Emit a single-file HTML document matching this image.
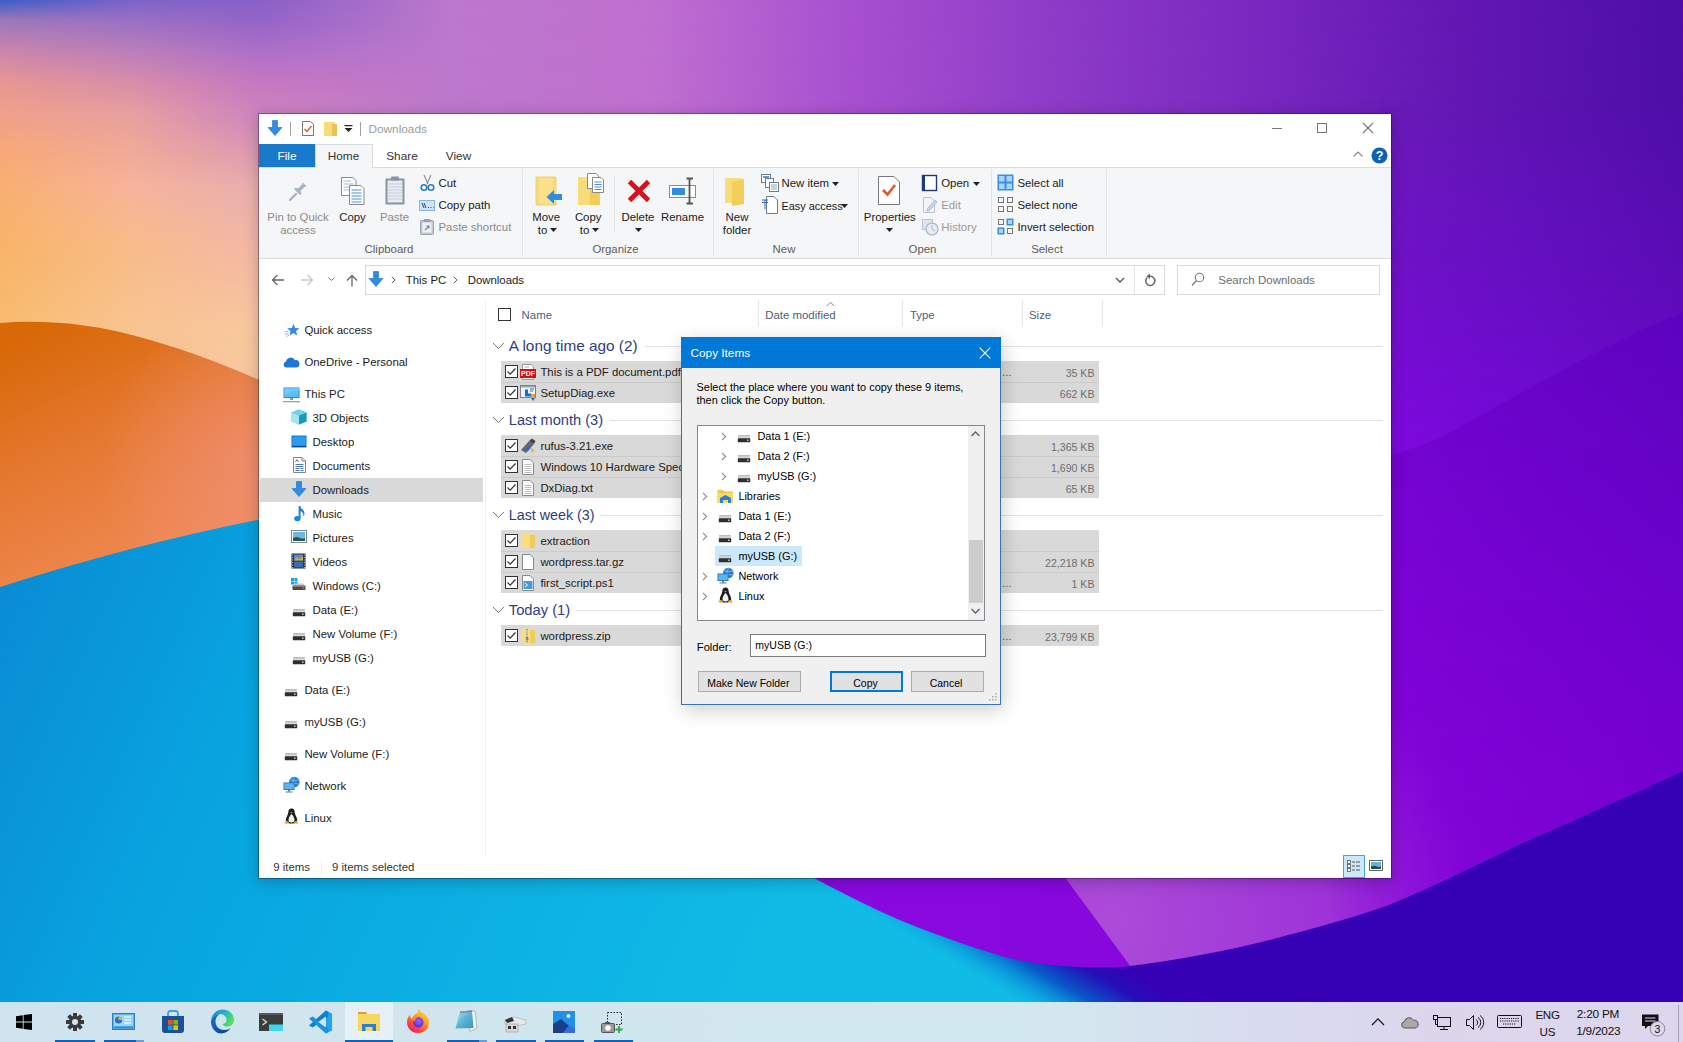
<!DOCTYPE html>
<html><head><meta charset="utf-8"><style>
html,body{margin:0;padding:0;width:1683px;height:1042px;overflow:hidden;background:#6a30c0}
body{position:relative;font-family:"Liberation Sans",sans-serif}
.a{position:absolute}
.t{position:absolute;white-space:nowrap;line-height:1;font-family:"Liberation Sans",sans-serif}
svg.a{overflow:visible}
</style></head><body>
<svg class="a" style="left:0;top:0" width="1683" height="1042" viewBox="0 0 1683 1042">
<defs>
<linearGradient id="skyr0" x1="0" y1="0" x2="1683" y2="0" gradientUnits="userSpaceOnUse"><stop offset="0.0000" stop-color="#3c5cc8"/><stop offset="0.0772" stop-color="#7c64c8"/><stop offset="0.1545" stop-color="#8a60c8"/><stop offset="0.2674" stop-color="#bc78cc"/><stop offset="0.3862" stop-color="#c070d0"/><stop offset="0.5051" stop-color="#a850d0"/><stop offset="0.6239" stop-color="#8e3cc8"/><stop offset="0.7427" stop-color="#7a28c0"/><stop offset="0.8616" stop-color="#6418b4"/><stop offset="1.0000" stop-color="#4e0ea8"/></linearGradient><linearGradient id="skyr1" x1="0" y1="0" x2="1683" y2="0" gradientUnits="userSpaceOnUse"><stop offset="0.0000" stop-color="#9a78b8"/><stop offset="0.0772" stop-color="#9a70c4"/><stop offset="0.1545" stop-color="#9464c8"/><stop offset="0.2674" stop-color="#bc78cc"/><stop offset="0.3862" stop-color="#c070d0"/><stop offset="0.5051" stop-color="#a850d0"/><stop offset="0.6239" stop-color="#8e3cc8"/><stop offset="0.7427" stop-color="#7a28c0"/><stop offset="0.8616" stop-color="#6418b4"/><stop offset="1.0000" stop-color="#4e0ea8"/></linearGradient><linearGradient id="skyr2" x1="0" y1="0" x2="1683" y2="0" gradientUnits="userSpaceOnUse"><stop offset="0.0000" stop-color="#d088a8"/><stop offset="0.0772" stop-color="#c080b8"/><stop offset="0.1545" stop-color="#b070c8"/><stop offset="0.2674" stop-color="#bc78cc"/><stop offset="0.3862" stop-color="#c070d0"/><stop offset="0.5051" stop-color="#a850d0"/><stop offset="0.6239" stop-color="#8e3cc8"/><stop offset="0.7427" stop-color="#7a28c0"/><stop offset="0.8616" stop-color="#6418b4"/><stop offset="1.0000" stop-color="#4e0ea8"/></linearGradient><linearGradient id="skyr3" x1="0" y1="0" x2="1683" y2="0" gradientUnits="userSpaceOnUse"><stop offset="0.0000" stop-color="#e89890"/><stop offset="0.0772" stop-color="#d890a8"/><stop offset="0.1545" stop-color="#c878c0"/><stop offset="0.2674" stop-color="#bc78cc"/><stop offset="0.3862" stop-color="#c070d0"/><stop offset="0.5051" stop-color="#a850d0"/><stop offset="0.6239" stop-color="#8e3cc8"/><stop offset="0.7427" stop-color="#7a28c0"/><stop offset="0.8616" stop-color="#6418b4"/><stop offset="1.0000" stop-color="#4e0ea8"/></linearGradient><linearGradient id="skyr4" x1="0" y1="0" x2="1683" y2="0" gradientUnits="userSpaceOnUse"><stop offset="0.0000" stop-color="#f0a088"/><stop offset="0.0772" stop-color="#e8a0a0"/><stop offset="0.1545" stop-color="#cc84c0"/><stop offset="0.2674" stop-color="#bc78cc"/><stop offset="0.3862" stop-color="#c070d0"/><stop offset="0.5051" stop-color="#a850d0"/><stop offset="0.6239" stop-color="#8e3cc8"/><stop offset="0.7427" stop-color="#7a28c0"/><stop offset="0.8616" stop-color="#6418b4"/><stop offset="1.0000" stop-color="#4e0ea8"/></linearGradient><linearGradient id="skyr5" x1="0" y1="0" x2="1683" y2="0" gradientUnits="userSpaceOnUse"><stop offset="0.0000" stop-color="#f8a878"/><stop offset="0.0772" stop-color="#f0aa98"/><stop offset="0.1545" stop-color="#dc98b4"/><stop offset="0.2674" stop-color="#bc78cc"/><stop offset="0.3862" stop-color="#c070d0"/><stop offset="0.5051" stop-color="#a850d0"/><stop offset="0.6239" stop-color="#8e3cc8"/><stop offset="0.7427" stop-color="#7a28c0"/><stop offset="0.8616" stop-color="#6418b4"/><stop offset="1.0000" stop-color="#4e0ea8"/></linearGradient><linearGradient id="skyr6" x1="0" y1="0" x2="1683" y2="0" gradientUnits="userSpaceOnUse"><stop offset="0.0000" stop-color="#f8b070"/><stop offset="0.0772" stop-color="#f8b49a"/><stop offset="0.1545" stop-color="#e8b0b0"/><stop offset="0.2674" stop-color="#bc78cc"/><stop offset="0.3862" stop-color="#c070d0"/><stop offset="0.5051" stop-color="#a850d0"/><stop offset="0.6239" stop-color="#8e3cc8"/><stop offset="0.7427" stop-color="#7a28c0"/><stop offset="0.8616" stop-color="#6418b4"/><stop offset="1.0000" stop-color="#4e0ea8"/></linearGradient><linearGradient id="skyr7" x1="0" y1="0" x2="1683" y2="0" gradientUnits="userSpaceOnUse"><stop offset="0.0000" stop-color="#f8b468"/><stop offset="0.0772" stop-color="#f8bc88"/><stop offset="0.1545" stop-color="#f4b8a8"/><stop offset="0.2674" stop-color="#bc78cc"/><stop offset="0.3862" stop-color="#c070d0"/><stop offset="0.5051" stop-color="#a850d0"/><stop offset="0.6239" stop-color="#8e3cc8"/><stop offset="0.7427" stop-color="#7a28c0"/><stop offset="0.8616" stop-color="#6418b4"/><stop offset="1.0000" stop-color="#4e0ea8"/></linearGradient><linearGradient id="skyr8" x1="0" y1="0" x2="1683" y2="0" gradientUnits="userSpaceOnUse"><stop offset="0.0000" stop-color="#f8bc70"/><stop offset="0.0772" stop-color="#f8c490"/><stop offset="0.1545" stop-color="#f8c8a0"/><stop offset="0.2674" stop-color="#bc78cc"/><stop offset="0.3862" stop-color="#c070d0"/><stop offset="0.5051" stop-color="#a850d0"/><stop offset="0.6239" stop-color="#8e3cc8"/><stop offset="0.7427" stop-color="#7a28c0"/><stop offset="0.8616" stop-color="#6418b4"/><stop offset="1.0000" stop-color="#4e0ea8"/></linearGradient><linearGradient id="skyr9" x1="0" y1="0" x2="1683" y2="0" gradientUnits="userSpaceOnUse"><stop offset="0.0000" stop-color="#f8bc70"/><stop offset="0.0772" stop-color="#f8c490"/><stop offset="0.1545" stop-color="#f8c8a0"/><stop offset="0.2674" stop-color="#bc78cc"/><stop offset="0.3862" stop-color="#c070d0"/><stop offset="0.5051" stop-color="#a850d0"/><stop offset="0.6239" stop-color="#8e3cc8"/><stop offset="0.7427" stop-color="#7a28c0"/><stop offset="0.8616" stop-color="#6418b4"/><stop offset="1.0000" stop-color="#4e0ea8"/></linearGradient><linearGradient id="skym0" x1="0" y1="0" x2="0" y2="20" gradientUnits="userSpaceOnUse"><stop offset="0" stop-color="#fff" stop-opacity="0"/><stop offset="1" stop-color="#fff" stop-opacity="1"/></linearGradient><mask id="skyk0" maskUnits="userSpaceOnUse" x="0" y="0" width="1683" height="20"><rect x="0" y="0" width="1683" height="20" fill="url(#skym0)"/></mask><linearGradient id="skym1" x1="0" y1="20" x2="0" y2="55" gradientUnits="userSpaceOnUse"><stop offset="0" stop-color="#fff" stop-opacity="0"/><stop offset="1" stop-color="#fff" stop-opacity="1"/></linearGradient><mask id="skyk1" maskUnits="userSpaceOnUse" x="0" y="20" width="1683" height="35"><rect x="0" y="20" width="1683" height="35" fill="url(#skym1)"/></mask><linearGradient id="skym2" x1="0" y1="55" x2="0" y2="85" gradientUnits="userSpaceOnUse"><stop offset="0" stop-color="#fff" stop-opacity="0"/><stop offset="1" stop-color="#fff" stop-opacity="1"/></linearGradient><mask id="skyk2" maskUnits="userSpaceOnUse" x="0" y="55" width="1683" height="30"><rect x="0" y="55" width="1683" height="30" fill="url(#skym2)"/></mask><linearGradient id="skym3" x1="0" y1="85" x2="0" y2="115" gradientUnits="userSpaceOnUse"><stop offset="0" stop-color="#fff" stop-opacity="0"/><stop offset="1" stop-color="#fff" stop-opacity="1"/></linearGradient><mask id="skyk3" maskUnits="userSpaceOnUse" x="0" y="85" width="1683" height="30"><rect x="0" y="85" width="1683" height="30" fill="url(#skym3)"/></mask><linearGradient id="skym4" x1="0" y1="115" x2="0" y2="150" gradientUnits="userSpaceOnUse"><stop offset="0" stop-color="#fff" stop-opacity="0"/><stop offset="1" stop-color="#fff" stop-opacity="1"/></linearGradient><mask id="skyk4" maskUnits="userSpaceOnUse" x="0" y="115" width="1683" height="35"><rect x="0" y="115" width="1683" height="35" fill="url(#skym4)"/></mask><linearGradient id="skym5" x1="0" y1="150" x2="0" y2="190" gradientUnits="userSpaceOnUse"><stop offset="0" stop-color="#fff" stop-opacity="0"/><stop offset="1" stop-color="#fff" stop-opacity="1"/></linearGradient><mask id="skyk5" maskUnits="userSpaceOnUse" x="0" y="150" width="1683" height="40"><rect x="0" y="150" width="1683" height="40" fill="url(#skym5)"/></mask><linearGradient id="skym6" x1="0" y1="190" x2="0" y2="250" gradientUnits="userSpaceOnUse"><stop offset="0" stop-color="#fff" stop-opacity="0"/><stop offset="1" stop-color="#fff" stop-opacity="1"/></linearGradient><mask id="skyk6" maskUnits="userSpaceOnUse" x="0" y="190" width="1683" height="60"><rect x="0" y="190" width="1683" height="60" fill="url(#skym6)"/></mask><linearGradient id="skym7" x1="0" y1="250" x2="0" y2="330" gradientUnits="userSpaceOnUse"><stop offset="0" stop-color="#fff" stop-opacity="0"/><stop offset="1" stop-color="#fff" stop-opacity="1"/></linearGradient><mask id="skyk7" maskUnits="userSpaceOnUse" x="0" y="250" width="1683" height="80"><rect x="0" y="250" width="1683" height="80" fill="url(#skym7)"/></mask><linearGradient id="skym8" x1="0" y1="330" x2="0" y2="440" gradientUnits="userSpaceOnUse"><stop offset="0" stop-color="#fff" stop-opacity="0"/><stop offset="1" stop-color="#fff" stop-opacity="1"/></linearGradient><mask id="skyk8" maskUnits="userSpaceOnUse" x="0" y="330" width="1683" height="110"><rect x="0" y="330" width="1683" height="110" fill="url(#skym8)"/></mask>
<linearGradient id="rsr0" x1="1380" y1="0" x2="1683" y2="0" gradientUnits="userSpaceOnUse"><stop offset="0.0000" stop-color="#6a1cb8"/><stop offset="0.4950" stop-color="#5c14b0"/><stop offset="1.0000" stop-color="#4e0ea8"/></linearGradient><linearGradient id="rsr1" x1="1380" y1="0" x2="1683" y2="0" gradientUnits="userSpaceOnUse"><stop offset="0.0000" stop-color="#7012c8"/><stop offset="0.4950" stop-color="#6410c0"/><stop offset="1.0000" stop-color="#5a0cb4"/></linearGradient><linearGradient id="rsr2" x1="1380" y1="0" x2="1683" y2="0" gradientUnits="userSpaceOnUse"><stop offset="0.0000" stop-color="#8008e0"/><stop offset="0.4950" stop-color="#7408d8"/><stop offset="1.0000" stop-color="#6a08cc"/></linearGradient><linearGradient id="rsr3" x1="1380" y1="0" x2="1683" y2="0" gradientUnits="userSpaceOnUse"><stop offset="0.0000" stop-color="#7c04d6"/><stop offset="0.4950" stop-color="#7404d0"/><stop offset="1.0000" stop-color="#6a04c8"/></linearGradient><linearGradient id="rsm0" x1="0" y1="100" x2="0" y2="250" gradientUnits="userSpaceOnUse"><stop offset="0" stop-color="#fff" stop-opacity="0"/><stop offset="1" stop-color="#fff" stop-opacity="1"/></linearGradient><mask id="rsk0" maskUnits="userSpaceOnUse" x="1380" y="100" width="303" height="150"><rect x="1380" y="100" width="303" height="150" fill="url(#rsm0)"/></mask><linearGradient id="rsm1" x1="0" y1="250" x2="0" y2="460" gradientUnits="userSpaceOnUse"><stop offset="0" stop-color="#fff" stop-opacity="0"/><stop offset="1" stop-color="#fff" stop-opacity="1"/></linearGradient><mask id="rsk1" maskUnits="userSpaceOnUse" x="1380" y="250" width="303" height="210"><rect x="1380" y="250" width="303" height="210" fill="url(#rsm1)"/></mask><linearGradient id="rsm2" x1="0" y1="460" x2="0" y2="700" gradientUnits="userSpaceOnUse"><stop offset="0" stop-color="#fff" stop-opacity="0"/><stop offset="1" stop-color="#fff" stop-opacity="1"/></linearGradient><mask id="rsk2" maskUnits="userSpaceOnUse" x="1380" y="460" width="303" height="240"><rect x="1380" y="460" width="303" height="240" fill="url(#rsm2)"/></mask>
<linearGradient id="lbr0" x1="1000" y1="0" x2="1683" y2="0" gradientUnits="userSpaceOnUse"><stop offset="0.0000" stop-color="#6c06cc"/><stop offset="0.5725" stop-color="#6c06cc"/><stop offset="0.7906" stop-color="#6404c4"/><stop offset="1.0000" stop-color="#5c04be"/></linearGradient><linearGradient id="lbr1" x1="1000" y1="0" x2="1683" y2="0" gradientUnits="userSpaceOnUse"><stop offset="0.0000" stop-color="#8404d8"/><stop offset="0.5725" stop-color="#7c04d6"/><stop offset="0.7906" stop-color="#7402d0"/><stop offset="1.0000" stop-color="#6c02cc"/></linearGradient><linearGradient id="lbr2" x1="1000" y1="0" x2="1683" y2="0" gradientUnits="userSpaceOnUse"><stop offset="0.0000" stop-color="#8808de"/><stop offset="0.5725" stop-color="#8404d8"/><stop offset="0.7906" stop-color="#7c02d4"/><stop offset="1.0000" stop-color="#7600d0"/></linearGradient><linearGradient id="lbr3" x1="1000" y1="0" x2="1683" y2="0" gradientUnits="userSpaceOnUse"><stop offset="0.0000" stop-color="#8808de"/><stop offset="0.5725" stop-color="#8a0cda"/><stop offset="0.7906" stop-color="#8002d4"/><stop offset="1.0000" stop-color="#7c00d0"/></linearGradient><linearGradient id="lbm0" x1="0" y1="300" x2="0" y2="600" gradientUnits="userSpaceOnUse"><stop offset="0" stop-color="#fff" stop-opacity="0"/><stop offset="1" stop-color="#fff" stop-opacity="1"/></linearGradient><mask id="lbk0" maskUnits="userSpaceOnUse" x="1000" y="300" width="683" height="300"><rect x="1000" y="300" width="683" height="300" fill="url(#lbm0)"/></mask><linearGradient id="lbm1" x1="0" y1="600" x2="0" y2="800" gradientUnits="userSpaceOnUse"><stop offset="0" stop-color="#fff" stop-opacity="0"/><stop offset="1" stop-color="#fff" stop-opacity="1"/></linearGradient><mask id="lbk1" maskUnits="userSpaceOnUse" x="1000" y="600" width="683" height="200"><rect x="1000" y="600" width="683" height="200" fill="url(#lbm1)"/></mask><linearGradient id="lbm2" x1="0" y1="800" x2="0" y2="1000" gradientUnits="userSpaceOnUse"><stop offset="0" stop-color="#fff" stop-opacity="0"/><stop offset="1" stop-color="#fff" stop-opacity="1"/></linearGradient><mask id="lbk2" maskUnits="userSpaceOnUse" x="1000" y="800" width="683" height="200"><rect x="1000" y="800" width="683" height="200" fill="url(#lbm2)"/></mask>
<linearGradient id="gOrange" x1="40" y1="330" x2="170" y2="600" gradientUnits="userSpaceOnUse">
<stop offset="0" stop-color="#d86808"/>
<stop offset="0.45" stop-color="#e67a34"/>
<stop offset="1" stop-color="#f28e5c"/>
</linearGradient>
<radialGradient id="gPinkTint" cx="270" cy="470" r="170" gradientUnits="userSpaceOnUse">
<stop offset="0" stop-color="#f0907c" stop-opacity="0.75"/>
<stop offset="1" stop-color="#f0907c" stop-opacity="0"/>
</radialGradient>
<clipPath id="orangeClip"><path d="M0,323 C40,320 90,322 150,340 C200,354 240,372 262,381 L900,560 L900,800 L0,800 Z"/></clipPath>
<linearGradient id="gBlue" x1="0" y1="600" x2="800" y2="960" gradientUnits="userSpaceOnUse">
<stop offset="0" stop-color="#0a8cd4"/>
<stop offset="0.3" stop-color="#08a4e0"/>
<stop offset="1" stop-color="#10bce6"/>
</linearGradient>
<linearGradient id="gUpWave" x1="1391" y1="450" x2="1683" y2="320" gradientUnits="userSpaceOnUse">
<stop offset="0" stop-color="#6e06d0" stop-opacity="0.55"/>
<stop offset="1" stop-color="#5a06c0" stop-opacity="0.55"/>
</linearGradient>
<linearGradient id="gDeep" x1="975" y1="978" x2="1018" y2="905" gradientUnits="userSpaceOnUse">
<stop offset="0" stop-color="#10b0e4" stop-opacity="0"/>
<stop offset="0.2" stop-color="#0a98dc" stop-opacity="0.7"/>
<stop offset="0.45" stop-color="#0858c8"/>
<stop offset="0.75" stop-color="#2410b8"/>
<stop offset="1" stop-color="#3600b4"/>
</linearGradient>
<radialGradient id="gLight" cx="1110" cy="920" r="360" gradientUnits="userSpaceOnUse">
<stop offset="0" stop-color="#ac4cd8"/>
<stop offset="0.6" stop-color="#a038d8" stop-opacity="0.9"/>
<stop offset="1" stop-color="#9020d8" stop-opacity="0"/>
</radialGradient>
<clipPath id="lobeClip"><path d="M700,820 C760,850 790,866 814,878 C850,897 880,912 907,923 C950,940 985,952 1014,959 C1050,966 1085,968 1121,967 C1180,960 1230,950 1273,939 C1315,928 1355,917 1391,904 C1430,888 1470,868 1516,846 C1580,818 1630,795 1683,771 L1683,312 C1600,345 1520,395 1440,438 C1420,446 1400,452 1380,460 L700,500 Z"/></clipPath>
</defs>
<rect x="0" y="0" width="1683" height="1042" fill="#7000cc"/>
<rect x="0" y="0" width="1683" height="20.5" fill="url(#skyr0)"/><rect x="0" y="0" width="1683" height="20.5" fill="url(#skyr1)" mask="url(#skyk0)"/><rect x="0" y="20" width="1683" height="35.5" fill="url(#skyr1)"/><rect x="0" y="20" width="1683" height="35.5" fill="url(#skyr2)" mask="url(#skyk1)"/><rect x="0" y="55" width="1683" height="30.5" fill="url(#skyr2)"/><rect x="0" y="55" width="1683" height="30.5" fill="url(#skyr3)" mask="url(#skyk2)"/><rect x="0" y="85" width="1683" height="30.5" fill="url(#skyr3)"/><rect x="0" y="85" width="1683" height="30.5" fill="url(#skyr4)" mask="url(#skyk3)"/><rect x="0" y="115" width="1683" height="35.5" fill="url(#skyr4)"/><rect x="0" y="115" width="1683" height="35.5" fill="url(#skyr5)" mask="url(#skyk4)"/><rect x="0" y="150" width="1683" height="40.5" fill="url(#skyr5)"/><rect x="0" y="150" width="1683" height="40.5" fill="url(#skyr6)" mask="url(#skyk5)"/><rect x="0" y="190" width="1683" height="60.5" fill="url(#skyr6)"/><rect x="0" y="190" width="1683" height="60.5" fill="url(#skyr7)" mask="url(#skyk6)"/><rect x="0" y="250" width="1683" height="80.5" fill="url(#skyr7)"/><rect x="0" y="250" width="1683" height="80.5" fill="url(#skyr8)" mask="url(#skyk7)"/><rect x="0" y="330" width="1683" height="110.5" fill="url(#skyr8)"/><rect x="0" y="330" width="1683" height="110.5" fill="url(#skyr9)" mask="url(#skyk8)"/>
<rect x="1380" y="100" width="303" height="150.5" fill="url(#rsr0)"/><rect x="1380" y="100" width="303" height="150.5" fill="url(#rsr1)" mask="url(#rsk0)"/><rect x="1380" y="250" width="303" height="210.5" fill="url(#rsr1)"/><rect x="1380" y="250" width="303" height="210.5" fill="url(#rsr2)" mask="url(#rsk1)"/><rect x="1380" y="460" width="303" height="240.5" fill="url(#rsr2)"/><rect x="1380" y="460" width="303" height="240.5" fill="url(#rsr3)" mask="url(#rsk2)"/>
<path d="M0,323 C40,320 90,322 150,340 C200,354 240,372 262,381 L900,560 L900,800 L0,800 Z" fill="url(#gOrange)"/>
<rect x="0" y="300" width="600" height="400" fill="url(#gPinkTint)" clip-path="url(#orangeClip)"/>
<path d="M0,587 C90,558 180,535 262,519 L1100,400 L1100,1042 L0,1042 Z" fill="url(#gBlue)"/>
<path d="M780,860 L1121,967 L1683,771 L1683,1042 L900,1042 Z" fill="url(#gDeep)"/>
<g clip-path="url(#lobeClip)">
<rect x="700" y="300" width="983" height="700" fill="#8808de"/>
<rect x="1000" y="300" width="683" height="300.5" fill="url(#lbr0)"/><rect x="1000" y="300" width="683" height="300.5" fill="url(#lbr1)" mask="url(#lbk0)"/><rect x="1000" y="600" width="683" height="200.5" fill="url(#lbr1)"/><rect x="1000" y="600" width="683" height="200.5" fill="url(#lbr2)" mask="url(#lbk1)"/><rect x="1000" y="800" width="683" height="200.5" fill="url(#lbr2)"/><rect x="1000" y="800" width="683" height="200.5" fill="url(#lbr3)" mask="url(#lbk2)"/>
<path d="M1030,830 L1131,967 L1683,967 L1683,500 L1400,500 Z" fill="url(#gLight)"/>
</g>
</svg>
<div class="a" style="left:258px;top:113px;width:1134px;height:766px;background:#fff;background-clip:padding-box;border:1px solid rgba(20,0,40,0.35);box-sizing:border-box;box-shadow:0 3px 14px rgba(0,0,0,0.22)"></div>
<svg class="a" style="left:267px;top:120px;" width="16" height="16" viewBox="0 0 16 16"><path d="M5.5 0.5 H10.5 V7.5 H15 L8 15.5 L1 7.5 H5.5 Z" fill="#2b8de6" stroke="#1f6fc0" stroke-width="0.6"/></svg>
<div class="a" style="left:290px;top:122px;width:1px;height:14px;background:#a0a0a0"></div>
<svg class="a" style="left:301px;top:120px;" width="14" height="17" viewBox="0 0 14 17"><path d="M1.5 1.5 H9.5 L12.5 4.5 V15.5 H1.5 Z" fill="#fff" stroke="#777" stroke-width="1"/><path d="M3.5 9 L6 11.5 L10.5 6" fill="none" stroke="#e2582c" stroke-width="1.4"/></svg>
<svg class="a" style="left:323px;top:121px;" width="15" height="16" viewBox="0 0 15 16"><path d="M1 1 H8 V15 H1 Z" fill="#f2d15e"/><path d="M1 1 H12 V15 H1 Z" fill="#f8dc78"/><path d="M9 3 H14 V15 H9 Z" fill="#e8c255"/></svg>
<svg class="a" style="left:344px;top:125px;" width="9" height="8" viewBox="0 0 9 8"><rect x="0.5" y="0" width="8" height="1.2" fill="#222"/><path d="M0.5 3 H8.5 L4.5 7 Z" fill="#222"/></svg>
<div class="a" style="left:360px;top:122px;width:1px;height:14px;background:#a0a0a0"></div>
<div class="t" style="left:368.50px;top:124.01px;font-size:11.8px;color:#9b9b9b;">Downloads</div>
<div class="a" style="left:1272px;top:128px;width:10px;height:1px;background:#777"></div>
<div class="a" style="left:1317px;top:123px;width:10px;height:10px;border:1px solid #777;box-sizing:border-box"></div>
<svg class="a" style="left:1362px;top:122px;" width="12" height="12" viewBox="0 0 12 12"><path d="M1 1 L11 11 M11 1 L1 11" stroke="#777" stroke-width="1.1"/></svg>
<div class="a" style="left:259px;top:144px;width:56px;height:23px;background:#1979ca"></div>
<div class="t" style="left:137.00px;width:300px;text-align:center;top:151.01px;font-size:11.8px;color:#fff;">File</div>
<div class="a" style="left:315px;top:144px;width:58px;height:24px;background:#f5f6f7;border:1px solid #dadbdc;border-bottom:none;box-sizing:border-box"></div>
<div class="t" style="left:193.50px;width:300px;text-align:center;top:151.01px;font-size:11.8px;color:#333;">Home</div>
<div class="t" style="left:252.00px;width:300px;text-align:center;top:151.01px;font-size:11.8px;color:#333;">Share</div>
<div class="t" style="left:308.50px;width:300px;text-align:center;top:151.01px;font-size:11.8px;color:#333;">View</div>
<svg class="a" style="left:1352px;top:150px;" width="12" height="8" viewBox="0 0 12 8"><path d="M1.5 6.5 L6 2 L10.5 6.5" fill="none" stroke="#888" stroke-width="1.1"/></svg>
<svg class="a" style="left:1371px;top:147px;" width="17" height="17" viewBox="0 0 17 17"><circle cx="8.5" cy="8.5" r="8" fill="#0b63b6"/><text x="8.5" y="13.2" font-family="Liberation Sans" font-weight="bold" font-size="12.5" fill="#fff" text-anchor="middle">?</text></svg>
<div class="a" style="left:259px;top:167px;width:1132px;height:92px;background:#f5f6f7;border-top:1px solid #dadbdc;border-bottom:1px solid #dadbdc;box-sizing:border-box"></div>
<div class="a" style="left:316px;top:167px;width:56px;height:1px;background:#f5f6f7"></div>
<div class="a" style="left:522px;top:169px;width:1px;height:87px;background:#e2e3e4"></div>
<div class="a" style="left:713px;top:169px;width:1px;height:87px;background:#e2e3e4"></div>
<div class="a" style="left:858px;top:169px;width:1px;height:87px;background:#e2e3e4"></div>
<div class="a" style="left:991px;top:169px;width:1px;height:87px;background:#e2e3e4"></div>
<div class="a" style="left:1106px;top:169px;width:1px;height:87px;background:#e2e3e4"></div>
<div class="t" style="left:239.00px;width:300px;text-align:center;top:244.35px;font-size:11.4px;color:#5c5c5c;">Clipboard</div>
<div class="t" style="left:465.50px;width:300px;text-align:center;top:244.35px;font-size:11.4px;color:#5c5c5c;">Organize</div>
<div class="t" style="left:634.00px;width:300px;text-align:center;top:244.35px;font-size:11.4px;color:#5c5c5c;">New</div>
<div class="t" style="left:772.50px;width:300px;text-align:center;top:244.35px;font-size:11.4px;color:#5c5c5c;">Open</div>
<div class="t" style="left:897.00px;width:300px;text-align:center;top:244.35px;font-size:11.4px;color:#5c5c5c;">Select</div>
<svg class="a" style="left:287px;top:180px;" width="22" height="22" viewBox="0 0 22 22"><path d="M3 20 L9 14" stroke="#aab4c6" stroke-width="2.4" stroke-linecap="round"/><path d="M7 9 L13 15 L14.5 13.5 L13.5 11 L18 6.5 L20 6.8 L15.2 2 L15.5 4 L11 8.5 L8.5 7.5 Z" fill="#aab4c6"/></svg>
<div class="t" style="left:148.00px;width:300px;text-align:center;top:211.85px;font-size:11.4px;color:#8a8a8a;">Pin to Quick</div>
<div class="t" style="left:148.00px;width:300px;text-align:center;top:224.85px;font-size:11.4px;color:#8a8a8a;">access</div>
<svg class="a" style="left:340px;top:176px;" width="26" height="30" viewBox="0 0 26 30"><path d="M1.5 1.5 H13 L16 4.5 V19.5 H1.5 Z" fill="#fff" stroke="#888" stroke-width="1"/>
<path d="M3.5 5 H11 M3.5 8 H13.5 M3.5 11 H13.5 M3.5 14 H13.5" stroke="#9fb9d8" stroke-width="1"/>
<path d="M9.5 9.5 H21 L24 12.5 V28.5 H9.5 Z" fill="#fff" stroke="#888" stroke-width="1"/>
<path d="M11.5 14 H21.5 M11.5 17 H21.5 M11.5 20 H21.5 M11.5 23 H21.5 M11.5 26 H21.5" stroke="#4a8fd8" stroke-width="1.1"/></svg>
<div class="t" style="left:202.50px;width:300px;text-align:center;top:211.85px;font-size:11.4px;color:#262626;">Copy</div>
<svg class="a" style="left:384px;top:175px;" width="22" height="31" viewBox="0 0 22 31"><rect x="1.5" y="3.5" width="19" height="26" rx="1" fill="#8a93a3"/><rect x="3.5" y="5.5" width="15" height="22" fill="#e6ebf4"/>
<path d="M4 9 H18 M4 12 H18 M4 15 H18 M4 18 H18 M4 21 H18 M4 24 H18" stroke="#c4cee0" stroke-width="1"/>
<rect x="7" y="1.5" width="8" height="4" rx="1" fill="#8a93a3"/></svg>
<div class="t" style="left:244.50px;width:300px;text-align:center;top:211.85px;font-size:11.4px;color:#8a8a8a;">Paste</div>
<svg class="a" style="left:420px;top:174px;" width="15" height="18" viewBox="0 0 15 18"><path d="M4 1 L8 10 M11 1 L7 10" stroke="#8a8a8a" stroke-width="1.1"/><circle cx="4" cy="13.5" r="2.8" fill="none" stroke="#2d7fc1" stroke-width="1.6"/><circle cx="11" cy="13.5" r="2.8" fill="none" stroke="#2d7fc1" stroke-width="1.6"/></svg>
<div class="t" style="left:438.50px;top:178.35px;font-size:11.4px;color:#1a1a1a;">Cut</div>
<svg class="a" style="left:419px;top:200px;" width="16" height="11" viewBox="0 0 16 11"><rect x="0.5" y="0.5" width="15" height="10" fill="#cfe3f5" stroke="#8bb4da" stroke-width="1"/><path d="M3 3 L5 8 M5 3 L7 8" stroke="#1f4e8a" stroke-width="1"/><path d="M9 7.5 H10 M11.5 7.5 H12.5 M14 7.5 H14.5" stroke="#1f4e8a" stroke-width="1"/></svg>
<div class="t" style="left:438.50px;top:200.35px;font-size:11.4px;color:#1a1a1a;">Copy path</div>
<svg class="a" style="left:420px;top:218px;" width="14" height="17" viewBox="0 0 14 17"><rect x="0.5" y="2.5" width="13" height="14" rx="1" fill="#c0c7d2" stroke="#9aa3b0"/><rect x="2.5" y="4.5" width="9" height="10" fill="#eef1f6"/><rect x="4" y="1" width="6" height="3" fill="#9aa3b0"/><path d="M5 12 L9 8 M6.5 8 H9 V10.5" stroke="#7a8aa0" stroke-width="1.2" fill="none"/></svg>
<div class="t" style="left:438.50px;top:222.35px;font-size:11.4px;color:#8a8a8a;">Paste shortcut</div>
<svg class="a" style="left:535px;top:175px;" width="29" height="31" viewBox="0 0 29 31"><path d="M1 2 H21 V30 H1 Z" fill="#fbe08a"/><path d="M3 2 V30 M19 2 V30" stroke="#f0cc60" stroke-width="0.8"/><path d="M1 2 H21 V30 H1 Z" fill="none" stroke="#ecc860" stroke-width="0.8"/><path d="M27 19 H19 V15 L11.5 22 L19 29 V25 H27 Z" fill="#2f8ce0"/></svg>
<div class="t" style="left:396.20px;width:300px;text-align:center;top:212.35px;font-size:11.4px;color:#1a1a1a;">Move</div>
<div class="t" style="left:392.50px;width:300px;text-align:center;top:225.35px;font-size:11.4px;color:#1a1a1a;">to</div>
<svg class="a" style="left:550px;top:228px;" width="7" height="4" viewBox="0 0 7 4"><path d="M0 0 H7 L3.5 4 Z" fill="#222"/></svg>
<svg class="a" style="left:577px;top:173px;" width="28" height="33" viewBox="0 0 28 33"><path d="M1 4 H16 V32 H1 Z" fill="#f9dc7a"/><path d="M13 7 H23 V32 H13 Z" fill="#f3cd5a"/>
<path d="M10.5 0.5 H19 L21.5 3 V15.5 H10.5 Z" fill="#fff" stroke="#888" stroke-width="1"/>
<path d="M15.5 4.5 H24 L26.5 7 V19.5 H15.5 Z" fill="#fff" stroke="#888" stroke-width="1"/>
<path d="M17.5 9 H24.5 M17.5 11.5 H24.5 M17.5 14 H24.5 M17.5 16.5 H24.5" stroke="#4a8fd8" stroke-width="1"/></svg>
<div class="t" style="left:438.20px;width:300px;text-align:center;top:212.35px;font-size:11.4px;color:#1a1a1a;">Copy</div>
<div class="t" style="left:434.50px;width:300px;text-align:center;top:225.35px;font-size:11.4px;color:#1a1a1a;">to</div>
<svg class="a" style="left:592px;top:228px;" width="7" height="4" viewBox="0 0 7 4"><path d="M0 0 H7 L3.5 4 Z" fill="#222"/></svg>
<div class="a" style="left:614px;top:176px;width:1px;height:56px;background:#e2e3e4"></div>
<svg class="a" style="left:626px;top:178px;" width="26" height="26" viewBox="0 0 26 26"><path d="M3.5 3.5 L22.5 22.5 M22.5 3.5 L3.5 22.5" stroke="#d8101c" stroke-width="4.8"/></svg>
<div class="t" style="left:488.00px;width:300px;text-align:center;top:212.35px;font-size:11.4px;color:#1a1a1a;">Delete</div>
<svg class="a" style="left:635px;top:228px;" width="7" height="4" viewBox="0 0 7 4"><path d="M0 0 H7 L3.5 4 Z" fill="#222"/></svg>
<svg class="a" style="left:668px;top:177px;" width="30" height="28" viewBox="0 0 30 28"><rect x="1.5" y="8.5" width="26" height="12" fill="#fff" stroke="#8a8a8a" stroke-width="1"/><rect x="4" y="11" width="13" height="7" fill="#2f8ce0"/>
<path d="M18.5 1.5 H25 M21.5 1.5 V26.5 M18.5 26.5 H25" stroke="#555" stroke-width="1.8"/></svg>
<div class="t" style="left:532.50px;width:300px;text-align:center;top:212.35px;font-size:11.4px;color:#1a1a1a;">Rename</div>
<svg class="a" style="left:724px;top:176px;" width="23" height="30" viewBox="0 0 23 30"><path d="M1 2 H18 V27 H1 Z" fill="#f9dc7a"/><path d="M8 6 L20 3 V28 L8 30 Z" fill="#f3cd5a"/></svg>
<div class="t" style="left:587.00px;width:300px;text-align:center;top:212.35px;font-size:11.4px;color:#1a1a1a;">New</div>
<div class="t" style="left:587.00px;width:300px;text-align:center;top:225.35px;font-size:11.4px;color:#1a1a1a;">folder</div>
<svg class="a" style="left:761px;top:174px;" width="18" height="18" viewBox="0 0 18 18"><rect x="0.5" y="0.5" width="9" height="8" fill="#fff" stroke="#6a7a90"/><rect x="2" y="2" width="6" height="2" fill="#5a9ad8"/><rect x="4.5" y="4.5" width="8" height="9" fill="#fff" stroke="#6a7a90"/><rect x="8.5" y="8.5" width="9" height="9" fill="#fff" stroke="#6a7a90"/><path d="M10 11 H16 M10 13 H16 M10 15 H16" stroke="#8aa"/></svg>
<div class="t" style="left:781.50px;top:178.35px;font-size:11.4px;color:#1a1a1a;">New item</div>
<svg class="a" style="left:832px;top:182px;" width="7" height="4" viewBox="0 0 7 4"><path d="M0 0 H7 L3.5 4 Z" fill="#222"/></svg>
<svg class="a" style="left:761px;top:196px;" width="18" height="18" viewBox="0 0 18 18"><path d="M5.5 0.5 H13 L16.5 4 V17.5 H5.5 Z" fill="#fff" stroke="#6a7a90"/><path d="M1 4 H7 M1 6.5 H7" stroke="#3a6ab0" stroke-width="1"/><path d="M4 4 V13" stroke="#3a6ab0"/></svg>
<div class="t" style="left:781.50px;top:200.77px;font-size:10.9px;color:#1a1a1a;">Easy access</div>
<svg class="a" style="left:841px;top:204px;" width="7" height="4" viewBox="0 0 7 4"><path d="M0 0 H7 L3.5 4 Z" fill="#222"/></svg>
<svg class="a" style="left:877px;top:175px;" width="24" height="31" viewBox="0 0 24 31"><path d="M1.5 1.5 H17 L22.5 7 V29.5 H1.5 Z" fill="#fff" stroke="#777" stroke-width="1"/><path d="M6 15 L10.5 19.5 L18 10" fill="none" stroke="#e2582c" stroke-width="2.6"/></svg>
<div class="t" style="left:739.80px;width:300px;text-align:center;top:212.35px;font-size:11.4px;color:#1a1a1a;">Properties</div>
<svg class="a" style="left:886px;top:228px;" width="7" height="4" viewBox="0 0 7 4"><path d="M0 0 H7 L3.5 4 Z" fill="#222"/></svg>
<svg class="a" style="left:921px;top:174px;" width="17" height="18" viewBox="0 0 17 18"><rect x="1.5" y="1.5" width="14" height="15" fill="#fff" stroke="#1e3a78" stroke-width="1.4"/><rect x="1" y="1" width="3" height="16" fill="#1e3a78"/></svg>
<div class="t" style="left:941.20px;top:178.35px;font-size:11.4px;color:#1a1a1a;">Open</div>
<svg class="a" style="left:973px;top:182px;" width="7" height="4" viewBox="0 0 7 4"><path d="M0 0 H7 L3.5 4 Z" fill="#222"/></svg>
<svg class="a" style="left:921px;top:196px;" width="17" height="18" viewBox="0 0 17 18"><path d="M2.5 1.5 H10 L13.5 5 V16.5 H2.5 Z" fill="#f2f4f8" stroke="#b8c4d6"/><path d="M6 13 L14 4 L16 6 L8 15 H6 Z" fill="#c8d4e8" stroke="#a8b8d0" stroke-width="0.8"/></svg>
<div class="t" style="left:941.20px;top:200.35px;font-size:11.4px;color:#9a9a9a;">Edit</div>
<svg class="a" style="left:921px;top:218px;" width="18" height="18" viewBox="0 0 18 18"><rect x="1.5" y="1.5" width="10" height="10" fill="#dfe5ee" stroke="#b8c4d6"/><circle cx="11" cy="11" r="6" fill="#e8edf4" stroke="#a8b4c6" stroke-width="1.2"/><path d="M11 7 V11 L14 13" stroke="#a8b4c6" fill="none"/></svg>
<div class="t" style="left:941.20px;top:222.35px;font-size:11.4px;color:#9a9a9a;">History</div>
<svg class="a" style="left:997px;top:174px;" width="17" height="17" viewBox="0 0 17 17"><rect x="0.5" y="0.5" width="16" height="16" fill="#3e8ee0"/><rect x="2" y="2" width="5.5" height="5.5" fill="#a8d4f8"/><rect x="9.5" y="2" width="5.5" height="5.5" fill="#a8d4f8"/><rect x="2" y="9.5" width="5.5" height="5.5" fill="#a8d4f8"/><rect x="9.5" y="9.5" width="5.5" height="5.5" fill="#a8d4f8"/></svg>
<div class="t" style="left:1017.40px;top:178.35px;font-size:11.4px;color:#1a1a1a;">Select all</div>
<svg class="a" style="left:997px;top:196px;" width="17" height="17" viewBox="0 0 17 17"><rect x="1.5" y="1.5" width="5" height="5" fill="none" stroke="#777"/><rect x="10.5" y="1.5" width="5" height="5" fill="none" stroke="#777"/><rect x="1.5" y="10.5" width="5" height="5" fill="none" stroke="#777"/><rect x="10.5" y="10.5" width="5" height="5" fill="none" stroke="#777"/></svg>
<div class="t" style="left:1017.40px;top:200.35px;font-size:11.4px;color:#1a1a1a;">Select none</div>
<svg class="a" style="left:997px;top:218px;" width="17" height="17" viewBox="0 0 17 17"><rect x="1.5" y="1.5" width="5" height="5" fill="none" stroke="#777"/><rect x="9.5" y="0.5" width="7" height="7" fill="#3e8ee0"/><rect x="11" y="2" width="4" height="4" fill="#a8d4f8"/><rect x="0.5" y="9.5" width="7" height="7" fill="#3e8ee0"/><rect x="2" y="11" width="4" height="4" fill="#a8d4f8"/><rect x="10.5" y="10.5" width="5" height="5" fill="none" stroke="#777"/></svg>
<div class="t" style="left:1017.40px;top:222.35px;font-size:11.4px;color:#1a1a1a;">Invert selection</div>
<svg class="a" style="left:271px;top:274px;" width="14" height="12" viewBox="0 0 14 12"><path d="M13 6 H1.5 M6.5 1 L1.5 6 L6.5 11" fill="none" stroke="#666" stroke-width="1.3"/></svg>
<svg class="a" style="left:300px;top:274px;" width="14" height="12" viewBox="0 0 14 12"><path d="M1 6 H12.5 M7.5 1 L12.5 6 L7.5 11" fill="none" stroke="#c8c8c8" stroke-width="1.3"/></svg>
<svg class="a" style="left:328px;top:277px;" width="7" height="5" viewBox="0 0 7 5"><path d="M0.5 0.5 L3.5 3.5 L6.5 0.5" fill="none" stroke="#777" stroke-width="1"/></svg>
<svg class="a" style="left:346px;top:274px;" width="12" height="13" viewBox="0 0 12 13"><path d="M6 12.5 V1.5 M1 6.5 L6 1.5 L11 6.5" fill="none" stroke="#666" stroke-width="1.3"/></svg>
<div class="a" style="left:365px;top:265px;width:800px;height:30px;border:1px solid #d9d9d9;box-sizing:border-box"></div>
<div class="a" style="left:1134px;top:266px;width:1px;height:28px;background:#e3e3e3"></div>
<svg class="a" style="left:368px;top:271px;" width="16" height="16" viewBox="0 0 16 16"><path d="M5.5 0.5 H10.5 V7.5 H15 L8 15.5 L1 7.5 H5.5 Z" fill="#2b8de6" stroke="#1f6fc0" stroke-width="0.6"/></svg>
<svg class="a" style="left:391px;top:276px;" width="5" height="8" viewBox="0 0 5 8"><path d="M0.8 0.8 L4 4 L0.8 7.2" fill="none" stroke="#666" stroke-width="1"/></svg>
<div class="t" style="left:405.80px;top:274.85px;font-size:11.4px;color:#1a1a1a;">This PC</div>
<svg class="a" style="left:453px;top:276px;" width="5" height="8" viewBox="0 0 5 8"><path d="M0.8 0.8 L4 4 L0.8 7.2" fill="none" stroke="#666" stroke-width="1"/></svg>
<div class="t" style="left:467.70px;top:274.85px;font-size:11.4px;color:#1a1a1a;">Downloads</div>
<svg class="a" style="left:1115px;top:277px;" width="10" height="6" viewBox="0 0 10 6"><path d="M1 1 L5 5 L9 1" fill="none" stroke="#555" stroke-width="1.3"/></svg>
<svg class="a" style="left:1144px;top:273px;" width="12" height="14" viewBox="0 0 12 14"><path d="M3.2 4.5 A4.6 4.6 0 1 0 6 3.3" fill="none" stroke="#666" stroke-width="1.5"/><path d="M6 0.5 V6 L2.5 3.2 Z" fill="#666"/></svg>
<div class="a" style="left:1177px;top:265px;width:203px;height:30px;border:1px solid #d9d9d9;box-sizing:border-box"></div>
<svg class="a" style="left:1191px;top:272px;" width="14" height="15" viewBox="0 0 14 15"><circle cx="8.5" cy="5.5" r="4.2" fill="none" stroke="#777" stroke-width="1.1"/><path d="M5.5 8.5 L1 13.5" stroke="#777" stroke-width="1.2"/></svg>
<div class="t" style="left:1218.30px;top:274.97px;font-size:11.5px;color:#6d6d6d;">Search Downloads</div>
<div class="a" style="left:260px;top:478px;width:223px;height:24px;background:#d9d9d9"></div>
<div class="a" style="left:485px;top:300px;width:1px;height:556px;background:#f0f0f0"></div>
<svg class="a" style="left:284px;top:323px;" width="16" height="14" viewBox="0 0 16 14"><path d="M9.5 0.5 L11 5 L15.5 5.2 L12 8 L13.2 12.5 L9.3 10 L5.5 12.8 L6.6 8.2 L3.3 5.3 L7.9 5 Z" fill="#2d8be6"/><path d="M0.5 9 L4 8.5 M1 11.5 L4.5 10.5 M2.5 13.5 L5 12.3" stroke="#6db4f0" stroke-width="0.9"/></svg>
<div class="t" style="left:304.40px;top:325.05px;font-size:11.4px;color:#1a1a1a;">Quick access</div>
<svg class="a" style="left:283px;top:356px;" width="17" height="12" viewBox="0 0 17 12"><path d="M3.2 11.5 A3 3 0 0 1 3 5.6 A4.8 4.8 0 0 1 12 4.2 A3.7 3.7 0 0 1 13.4 11.5 Z" fill="#1b78d4"/></svg>
<div class="t" style="left:304.40px;top:357.05px;font-size:11.4px;color:#1a1a1a;">OneDrive - Personal</div>
<svg class="a" style="left:283px;top:387px;" width="17" height="16" viewBox="0 0 17 16"><rect x="0.5" y="0.5" width="16" height="10.5" fill="#1f8ae6"/><rect x="1.5" y="1.5" width="14" height="8.5" fill="#5cc0f8"/><path d="M0.5 1 L16 1 L16 4 Q8 3 1.5 9 Z" fill="#7fd2fa" opacity="0.6"/><rect x="7" y="11" width="3" height="2" fill="#6aa"/><rect x="0" y="14" width="17" height="1.3" fill="#9aa3ad"/></svg>
<div class="t" style="left:304.40px;top:389.05px;font-size:11.4px;color:#1a1a1a;">This PC</div>
<svg class="a" style="left:291px;top:409px;" width="16" height="16" viewBox="0 0 16 16"><path d="M8 0.5 L15.5 3.5 V12.5 L8 15.5 L0.5 12.5 V3.5 Z" fill="#3fb8d8"/><path d="M0.5 3.5 L8 6.5 V15.5 L0.5 12.5 Z" fill="#a8e4ee"/><path d="M8 6.5 L15.5 3.5 V12.5 L8 15.5 Z" fill="#1e98c0"/><path d="M0.5 3.5 L8 0.5 L15.5 3.5 L8 6.5 Z" fill="#6fd4ea"/></svg>
<div class="t" style="left:312.50px;top:413.05px;font-size:11.4px;color:#1a1a1a;">3D Objects</div>
<svg class="a" style="left:291px;top:435px;" width="16" height="13" viewBox="0 0 16 13"><rect x="0.5" y="0.5" width="15" height="12" fill="#1878d0"/><rect x="1.5" y="1.5" width="13" height="9" fill="#2c9cf0"/><rect x="1" y="11" width="14" height="1" fill="#0a4a90"/></svg>
<div class="t" style="left:312.50px;top:437.05px;font-size:11.4px;color:#1a1a1a;">Desktop</div>
<svg class="a" style="left:293px;top:457px;" width="13" height="16" viewBox="0 0 13 16"><path d="M0.5 0.5 H9 L12.5 4 V15.5 H0.5 Z" fill="#fff" stroke="#7a8898"/><path d="M9 0.5 V4 H12.5" fill="none" stroke="#7a8898"/><path d="M2.5 5 L4 2.5 L5.5 5 M2.5 7.5 H10.5 M2.5 9.5 H10.5 M2.5 11.5 H6.5 M7.5 11.5 H10.5 M2.5 13.5 H6.5 M7.5 13.5 H10.5" stroke="#3a6aa8" stroke-width="0.9" fill="none"/></svg>
<div class="t" style="left:312.50px;top:461.05px;font-size:11.4px;color:#1a1a1a;">Documents</div>
<svg class="a" style="left:291px;top:481px;" width="16" height="16" viewBox="0 0 16 16"><path d="M5.5 0.5 H10.5 V7.5 H15 L8 15.5 L1 7.5 H5.5 Z" fill="#2b8de6" stroke="#1f6fc0" stroke-width="0.6"/></svg>
<div class="t" style="left:312.50px;top:485.05px;font-size:11.4px;color:#1a1a1a;">Downloads</div>
<svg class="a" style="left:294px;top:505px;" width="12" height="17" viewBox="0 0 12 17"><path d="M5.6 1 V13" stroke="#1a86e8" stroke-width="2"/><ellipse cx="3.4" cy="13.6" rx="3.2" ry="2.6" fill="#1a86e8"/><path d="M5 0.5 C6.5 3.5 10.5 4.5 10.5 8.5 C10.5 10 9.8 11 9.3 11.5 C9.8 9 8.5 6.5 5.5 6 Z" fill="#1a86e8"/></svg>
<div class="t" style="left:312.50px;top:509.05px;font-size:11.4px;color:#1a1a1a;">Music</div>
<svg class="a" style="left:291px;top:530px;" width="16" height="13" viewBox="0 0 16 13"><rect x="0.5" y="0.5" width="15" height="12" fill="#fff" stroke="#7a8a9a"/><rect x="2" y="2" width="12" height="9" fill="#6cb8e8"/><path d="M2 11 L2 8 Q6 6 9 8 Q12 9 14 8 V11 Z" fill="#2a5a48"/></svg>
<div class="t" style="left:312.50px;top:533.05px;font-size:11.4px;color:#1a1a1a;">Pictures</div>
<svg class="a" style="left:291px;top:553px;" width="15" height="16" viewBox="0 0 15 16"><rect x="0.5" y="0.5" width="14" height="15" fill="#2a2a2a"/><rect x="3" y="1.5" width="9" height="6" fill="#5a8ad0"/><rect x="3" y="8.5" width="9" height="6" fill="#3a6ab8"/><path d="M3 7.5 L6 4 L8 6 L12 3 V7.5 Z" fill="#c8b040"/><path d="M1.2 2 H2.2 M1.2 4.5 H2.2 M1.2 7 H2.2 M1.2 9.5 H2.2 M1.2 12 H2.2 M1.2 14.5 H2.2 M12.8 2 H13.8 M12.8 4.5 H13.8 M12.8 7 H13.8 M12.8 9.5 H13.8 M12.8 12 H13.8 M12.8 14.5 H13.8" stroke="#ddd" stroke-width="1"/></svg>
<div class="t" style="left:312.50px;top:557.05px;font-size:11.4px;color:#1a1a1a;">Videos</div>
<svg class="a" style="left:291px;top:577px;" width="16" height="16" viewBox="0 0 16 16"><rect x="0" y="1" width="3" height="3" fill="#1aa0e0"/><rect x="3.5" y="1" width="3" height="3" fill="#1aa0e0"/><rect x="0" y="4.5" width="3" height="3" fill="#1aa0e0"/><rect x="3.5" y="4.5" width="3" height="3" fill="#1aa0e0"/><path d="M2.5 8.5 L4 6.5 H12 L13.5 8.5 Z" fill="#c9c9c9"/><rect x="1.5" y="8.5" width="13" height="4.5" rx="0.8" fill="#4a4a4a"/><rect x="2" y="8.6" width="12" height="1.2" fill="#8c8c8c"/><rect x="11.5" y="10.5" width="1.6" height="1" fill="#7fdc5a"/></svg>
<div class="t" style="left:312.50px;top:581.05px;font-size:11.4px;color:#1a1a1a;">Windows (C:)</div>
<svg class="a" style="left:291px;top:601px;" width="16" height="16" viewBox="0 0 16 16"><path d="M2.2 8 H13.8 L14 11.5 H2 Z" fill="#d4d4d4"/><rect x="2" y="8" width="12" height="1.2" fill="#bdbdbd"/><rect x="1.8" y="11.3" width="12.4" height="4" rx="0.6" fill="#2e2e2e"/><rect x="11" y="12.6" width="1.6" height="1.2" fill="#d8f0d0"/></svg>
<div class="t" style="left:312.50px;top:605.05px;font-size:11.4px;color:#1a1a1a;">Data (E:)</div>
<svg class="a" style="left:291px;top:625px;" width="16" height="16" viewBox="0 0 16 16"><path d="M2.2 8 H13.8 L14 11.5 H2 Z" fill="#d4d4d4"/><rect x="2" y="8" width="12" height="1.2" fill="#bdbdbd"/><rect x="1.8" y="11.3" width="12.4" height="4" rx="0.6" fill="#2e2e2e"/><rect x="11" y="12.6" width="1.6" height="1.2" fill="#d8f0d0"/></svg>
<div class="t" style="left:312.50px;top:629.05px;font-size:11.4px;color:#1a1a1a;">New Volume (F:)</div>
<svg class="a" style="left:291px;top:649px;" width="16" height="16" viewBox="0 0 16 16"><path d="M2.2 8 H13.8 L14 11.5 H2 Z" fill="#d4d4d4"/><rect x="2" y="8" width="12" height="1.2" fill="#bdbdbd"/><rect x="1.8" y="11.3" width="12.4" height="4" rx="0.6" fill="#2e2e2e"/><rect x="11" y="12.6" width="1.6" height="1.2" fill="#d8f0d0"/></svg>
<div class="t" style="left:312.50px;top:653.05px;font-size:11.4px;color:#1a1a1a;">myUSB (G:)</div>
<svg class="a" style="left:283px;top:681px;" width="16" height="16" viewBox="0 0 16 16"><path d="M2.2 8 H13.8 L14 11.5 H2 Z" fill="#d4d4d4"/><rect x="2" y="8" width="12" height="1.2" fill="#bdbdbd"/><rect x="1.8" y="11.3" width="12.4" height="4" rx="0.6" fill="#2e2e2e"/><rect x="11" y="12.6" width="1.6" height="1.2" fill="#d8f0d0"/></svg>
<div class="t" style="left:304.40px;top:685.05px;font-size:11.4px;color:#1a1a1a;">Data (E:)</div>
<svg class="a" style="left:283px;top:713px;" width="16" height="16" viewBox="0 0 16 16"><path d="M2.2 8 H13.8 L14 11.5 H2 Z" fill="#d4d4d4"/><rect x="2" y="8" width="12" height="1.2" fill="#bdbdbd"/><rect x="1.8" y="11.3" width="12.4" height="4" rx="0.6" fill="#2e2e2e"/><rect x="11" y="12.6" width="1.6" height="1.2" fill="#d8f0d0"/></svg>
<div class="t" style="left:304.40px;top:717.05px;font-size:11.4px;color:#1a1a1a;">myUSB (G:)</div>
<svg class="a" style="left:283px;top:745px;" width="16" height="16" viewBox="0 0 16 16"><path d="M2.2 8 H13.8 L14 11.5 H2 Z" fill="#d4d4d4"/><rect x="2" y="8" width="12" height="1.2" fill="#bdbdbd"/><rect x="1.8" y="11.3" width="12.4" height="4" rx="0.6" fill="#2e2e2e"/><rect x="11" y="12.6" width="1.6" height="1.2" fill="#d8f0d0"/></svg>
<div class="t" style="left:304.40px;top:749.05px;font-size:11.4px;color:#1a1a1a;">New Volume (F:)</div>
<svg class="a" style="left:283px;top:776px;" width="17" height="17" viewBox="0 0 17 17"><circle cx="11.3" cy="6" r="5.3" fill="#2a7ad0"/><path d="M7 3.5 Q11 6 16 3.8 M7.5 8.5 Q11.5 6.5 16.3 8.2 M11.3 0.8 Q9 6 11.3 11.2" stroke="#8cc8f4" stroke-width="0.8" fill="none"/><rect x="0.5" y="6.5" width="11" height="7.5" fill="#1f6fb8"/><rect x="1.3" y="7.3" width="9.4" height="5.9" fill="#5cb4f0"/><rect x="5" y="14" width="2" height="1.5" fill="#777"/><rect x="2.5" y="15.5" width="7" height="1" fill="#777"/></svg>
<div class="t" style="left:304.40px;top:781.05px;font-size:11.4px;color:#1a1a1a;">Network</div>
<svg class="a" style="left:284px;top:808px;" width="15" height="17" viewBox="0 0 15 17"><path d="M7.5 0.5 C5 0.5 4.3 2.5 4.3 4.5 C4.3 6.5 2 9 1.8 12 C1.7 14 3 15.5 7.5 15.5 C12 15.5 13.3 14 13.2 12 C13 9 10.7 6.5 10.7 4.5 C10.7 2.5 10 0.5 7.5 0.5 Z" fill="#1e1e1e"/><path d="M7.5 6 C6 7.5 4.5 10 4.5 12 C4.5 13.8 6 14.5 7.5 14.5 C9 14.5 10.5 13.8 10.5 12 C10.5 10 9 7.5 7.5 6 Z" fill="#f2f2f2"/><path d="M6.3 4 H8.7 L7.5 5.6 Z" fill="#e8a820"/><path d="M0.5 14.5 C1.5 12.5 3.5 12.5 5 14.3 C4 16.2 1.5 16.3 0.5 14.5 Z" fill="#e8a820"/><path d="M14.5 14.5 C13.5 12.5 11.5 12.5 10 14.3 C11 16.2 13.5 16.3 14.5 14.5 Z" fill="#e8a820"/></svg>
<div class="t" style="left:304.40px;top:813.05px;font-size:11.4px;color:#1a1a1a;">Linux</div>
<div class="t" style="left:273.20px;top:861.95px;font-size:11.4px;color:#333;">9 items</div>
<div class="a" style="left:321px;top:860px;width:1px;height:16px;background:#f0f0f0"></div>
<div class="t" style="left:332.10px;top:861.95px;font-size:11.4px;color:#333;">9 items selected</div>
<div class="a" style="left:1343px;top:855px;width:22px;height:23px;background:#cbe9f8;border:1px solid #4ea0d0;box-sizing:border-box"></div>
<svg class="a" style="left:1347px;top:860px;" width="14" height="12" viewBox="0 0 14 12"><rect x="0.5" y="0.5" width="3" height="3" fill="#fff" stroke="#555" stroke-width="0.8"/><rect x="0.5" y="4.5" width="3" height="3" fill="#fff" stroke="#555" stroke-width="0.8"/><rect x="0.5" y="8.5" width="3" height="3" fill="#fff" stroke="#555" stroke-width="0.8"/><path d="M5 2 H8 M9 2 H13 M5 6 H8 M9 6 H13 M5 10 H8 M9 10 H13" stroke="#555" stroke-width="1"/></svg>
<svg class="a" style="left:1369px;top:860px;" width="14" height="11" viewBox="0 0 14 11"><rect x="0.5" y="0.5" width="13" height="10" fill="#fff" stroke="#666"/><rect x="2" y="2" width="10" height="7" fill="#6ab0e0"/><path d="M2 9 V6.5 Q6 5 8 6.5 Q10 7.5 12 6.5 V9 Z" fill="#2a4a48"/></svg>
<svg class="a" style="left:498px;top:308px;" width="13" height="13" viewBox="0 0 13 13"><rect x="0.5" y="0.5" width="12" height="12" fill="#fff" stroke="#333" stroke-width="1"/></svg>
<div class="t" style="left:521.60px;top:310.35px;font-size:11.4px;color:#4c607a;">Name</div>
<div class="t" style="left:765.30px;top:310.35px;font-size:11.4px;color:#4c607a;">Date modified</div>
<div class="t" style="left:910.00px;top:310.35px;font-size:11.4px;color:#4c607a;">Type</div>
<div class="t" style="left:1029.00px;top:310.35px;font-size:11.4px;color:#4c607a;">Size</div>
<div class="a" style="left:758px;top:300px;width:1px;height:27px;background:#e5e5e5"></div>
<div class="a" style="left:902px;top:300px;width:1px;height:27px;background:#e5e5e5"></div>
<div class="a" style="left:1022px;top:300px;width:1px;height:27px;background:#e5e5e5"></div>
<div class="a" style="left:1102px;top:300px;width:1px;height:27px;background:#e5e5e5"></div>
<svg class="a" style="left:826px;top:301px;" width="9" height="6" viewBox="0 0 9 6"><path d="M0.8 5 L4.5 1.2 L8.2 5" fill="none" stroke="#888" stroke-width="1"/></svg>
<svg class="a" style="left:492px;top:341.5px;" width="13" height="8" viewBox="0 0 13 8"><path d="M1 1 L6.5 6.5 L12 1" fill="none" stroke="#777" stroke-width="1"/></svg>
<div class="t" style="left:508.80px;top:338.01px;font-size:15.35px;color:#2d3e84;">A long time ago (2)</div>
<div class="a" style="left:645px;top:346px;width:738px;height:1px;background:#e2e2e2"></div>
<div class="a" style="left:501px;top:361px;width:598px;height:42px;background:#d9d9d9"></div>
<svg class="a" style="left:505px;top:365px;" width="13" height="13" viewBox="0 0 13 13"><rect x="0.5" y="0.5" width="12" height="12" fill="#fff" stroke="#333" stroke-width="1"/><path d="M2.5 6.5 L5.2 9.2 L10.5 3.5" fill="none" stroke="#333" stroke-width="1.2"/></svg>
<svg class="a" style="left:520px;top:364px;" width="16" height="16" viewBox="0 0 16 16"><path d="M2.5 0.5 H11 L13.5 3 V15.5 H2.5 Z" fill="#fff" stroke="#999"/><path d="M4.5 3 H9" stroke="#aaa"/><rect x="0" y="5" width="16" height="9" fill="#d0101c"/><text x="8" y="12.3" font-family="Liberation Sans" font-weight="bold" font-size="7" fill="#fff" text-anchor="middle">PDF</text></svg>
<div class="t" style="left:540.40px;top:367.35px;font-size:11.4px;color:#1a1a1a;">This is a PDF document.pdf</div>
<div class="t" style="left:794.50px;width:300px;text-align:right;top:368.03px;font-size:10.6px;color:#6d6d6d;">35 KB</div>
<div class="t" style="left:1002.00px;top:367.35px;font-size:11.4px;color:#555;">...</div>
<div class="a" style="left:501px;top:382px;width:598px;height:1px;background:#cbcbcb"></div>
<svg class="a" style="left:505px;top:386px;" width="13" height="13" viewBox="0 0 13 13"><rect x="0.5" y="0.5" width="12" height="12" fill="#fff" stroke="#333" stroke-width="1"/><path d="M2.5 6.5 L5.2 9.2 L10.5 3.5" fill="none" stroke="#333" stroke-width="1.2"/></svg>
<svg class="a" style="left:520px;top:385px;" width="16" height="17" viewBox="0 0 16 17"><rect x="0.5" y="0.5" width="15" height="12" fill="#eef4fa" stroke="#7a8090"/><rect x="1" y="1" width="14" height="1.5" fill="#9aa8b8"/><path d="M10 4 H14 M10 6 H13" stroke="#3a6ab0" stroke-width="1"/><path d="M5 4.5 H8 V8.5 H11 V11.5 H5 Z" fill="#1a6cc8"/><path d="M11 9 L15 9 L15 13 L11 13 Z" fill="#f0a030"/><path d="M11 13 L15 13 L13 16 Z" fill="#1a6cc8"/></svg>
<div class="t" style="left:540.40px;top:388.35px;font-size:11.4px;color:#1a1a1a;">SetupDiag.exe</div>
<div class="t" style="left:794.50px;width:300px;text-align:right;top:389.03px;font-size:10.6px;color:#6d6d6d;">662 KB</div>
<svg class="a" style="left:492px;top:415.5px;" width="13" height="8" viewBox="0 0 13 8"><path d="M1 1 L6.5 6.5 L12 1" fill="none" stroke="#777" stroke-width="1"/></svg>
<div class="t" style="left:508.80px;top:412.61px;font-size:14.64px;color:#2d3e84;">Last month (3)</div>
<div class="a" style="left:610px;top:420px;width:773px;height:1px;background:#e2e2e2"></div>
<div class="a" style="left:501px;top:435px;width:598px;height:63px;background:#d9d9d9"></div>
<svg class="a" style="left:505px;top:439px;" width="13" height="13" viewBox="0 0 13 13"><rect x="0.5" y="0.5" width="12" height="12" fill="#fff" stroke="#333" stroke-width="1"/><path d="M2.5 6.5 L5.2 9.2 L10.5 3.5" fill="none" stroke="#333" stroke-width="1.2"/></svg>
<svg class="a" style="left:520px;top:438px;" width="16" height="16" viewBox="0 0 16 16"><path d="M1 12 L9 3 L14 6 L6 15 Z" fill="#666"/><path d="M9 3 L12 0.5 L15.5 3 L14 6 Z" fill="#444"/><rect x="7" y="8" width="3" height="5" fill="#2a6ad0" transform="rotate(40 8 10)"/><path d="M11 10 L14 12 L12 15 Z" fill="#e8a040"/></svg>
<div class="t" style="left:540.40px;top:441.35px;font-size:11.4px;color:#1a1a1a;">rufus-3.21.exe</div>
<div class="t" style="left:794.50px;width:300px;text-align:right;top:442.03px;font-size:10.6px;color:#6d6d6d;">1,365 KB</div>
<div class="a" style="left:501px;top:456px;width:598px;height:1px;background:#cbcbcb"></div>
<svg class="a" style="left:505px;top:460px;" width="13" height="13" viewBox="0 0 13 13"><rect x="0.5" y="0.5" width="12" height="12" fill="#fff" stroke="#333" stroke-width="1"/><path d="M2.5 6.5 L5.2 9.2 L10.5 3.5" fill="none" stroke="#333" stroke-width="1.2"/></svg>
<svg class="a" style="left:520px;top:459px;" width="16" height="16" viewBox="0 0 16 16"><path d="M2.5 0.5 H10 L13.5 4 V15.5 H2.5 Z" fill="#fff" stroke="#8a8a8a"/><path d="M4.5 5.5 H11.5 M4.5 7.5 H11.5 M4.5 9.5 H11.5 M4.5 11.5 H11.5 M4.5 13.5 H11.5" stroke="#b8b8b8" stroke-width="0.9"/></svg>
<div class="t" style="left:540.40px;top:462.35px;font-size:11.4px;color:#1a1a1a;">Windows 10 Hardware Specs.txt</div>
<div class="t" style="left:794.50px;width:300px;text-align:right;top:463.03px;font-size:10.6px;color:#6d6d6d;">1,690 KB</div>
<div class="a" style="left:501px;top:477px;width:598px;height:1px;background:#cbcbcb"></div>
<svg class="a" style="left:505px;top:481px;" width="13" height="13" viewBox="0 0 13 13"><rect x="0.5" y="0.5" width="12" height="12" fill="#fff" stroke="#333" stroke-width="1"/><path d="M2.5 6.5 L5.2 9.2 L10.5 3.5" fill="none" stroke="#333" stroke-width="1.2"/></svg>
<svg class="a" style="left:520px;top:480px;" width="16" height="16" viewBox="0 0 16 16"><path d="M2.5 0.5 H10 L13.5 4 V15.5 H2.5 Z" fill="#fff" stroke="#8a8a8a"/><path d="M4.5 5.5 H11.5 M4.5 7.5 H11.5 M4.5 9.5 H11.5 M4.5 11.5 H11.5 M4.5 13.5 H11.5" stroke="#b8b8b8" stroke-width="0.9"/></svg>
<div class="t" style="left:540.40px;top:483.35px;font-size:11.4px;color:#1a1a1a;">DxDiag.txt</div>
<div class="t" style="left:794.50px;width:300px;text-align:right;top:484.03px;font-size:10.6px;color:#6d6d6d;">65 KB</div>
<svg class="a" style="left:492px;top:510.5px;" width="13" height="8" viewBox="0 0 13 8"><path d="M1 1 L6.5 6.5 L12 1" fill="none" stroke="#777" stroke-width="1"/></svg>
<div class="t" style="left:508.80px;top:507.90px;font-size:14.29px;color:#2d3e84;">Last week (3)</div>
<div class="a" style="left:600px;top:515px;width:783px;height:1px;background:#e2e2e2"></div>
<div class="a" style="left:501px;top:530px;width:598px;height:63px;background:#d9d9d9"></div>
<svg class="a" style="left:505px;top:534px;" width="13" height="13" viewBox="0 0 13 13"><rect x="0.5" y="0.5" width="12" height="12" fill="#fff" stroke="#333" stroke-width="1"/><path d="M2.5 6.5 L5.2 9.2 L10.5 3.5" fill="none" stroke="#333" stroke-width="1.2"/></svg>
<svg class="a" style="left:520px;top:533px;" width="16" height="16" viewBox="0 0 16 16"><path d="M1 1 H8 V15 H1 Z" fill="#f2d15e"/><path d="M1 1 H14 V15 H1 Z" fill="#f9de80"/><path d="M10 2 H15 V15 H10 Z" fill="#f0cc5a"/></svg>
<div class="t" style="left:540.40px;top:536.35px;font-size:11.4px;color:#1a1a1a;">extraction</div>
<div class="a" style="left:501px;top:551px;width:598px;height:1px;background:#cbcbcb"></div>
<svg class="a" style="left:505px;top:555px;" width="13" height="13" viewBox="0 0 13 13"><rect x="0.5" y="0.5" width="12" height="12" fill="#fff" stroke="#333" stroke-width="1"/><path d="M2.5 6.5 L5.2 9.2 L10.5 3.5" fill="none" stroke="#333" stroke-width="1.2"/></svg>
<svg class="a" style="left:520px;top:554px;" width="16" height="16" viewBox="0 0 16 16"><path d="M2.5 0.5 H10 L13.5 4 V15.5 H2.5 Z" fill="#fff" stroke="#8a8a8a"/></svg>
<div class="t" style="left:540.40px;top:557.35px;font-size:11.4px;color:#1a1a1a;">wordpress.tar.gz</div>
<div class="t" style="left:794.50px;width:300px;text-align:right;top:558.03px;font-size:10.6px;color:#6d6d6d;">22,218 KB</div>
<div class="a" style="left:501px;top:572px;width:598px;height:1px;background:#cbcbcb"></div>
<svg class="a" style="left:505px;top:576px;" width="13" height="13" viewBox="0 0 13 13"><rect x="0.5" y="0.5" width="12" height="12" fill="#fff" stroke="#333" stroke-width="1"/><path d="M2.5 6.5 L5.2 9.2 L10.5 3.5" fill="none" stroke="#333" stroke-width="1.2"/></svg>
<svg class="a" style="left:520px;top:575px;" width="16" height="16" viewBox="0 0 16 16"><path d="M2.5 0.5 H10 L13.5 4 V15.5 H2.5 Z" fill="#fff" stroke="#8a8a8a"/><rect x="3.5" y="6" width="9" height="8" fill="#4a9ad8"/><path d="M5 8 L7.5 10 L5 12" stroke="#fff" stroke-width="1" fill="none"/></svg>
<div class="t" style="left:540.40px;top:578.35px;font-size:11.4px;color:#1a1a1a;">first_script.ps1</div>
<div class="t" style="left:794.50px;width:300px;text-align:right;top:579.03px;font-size:10.6px;color:#6d6d6d;">1 KB</div>
<div class="t" style="left:1002.00px;top:578.35px;font-size:11.4px;color:#555;">...</div>
<svg class="a" style="left:492px;top:605.5px;" width="13" height="8" viewBox="0 0 13 8"><path d="M1 1 L6.5 6.5 L12 1" fill="none" stroke="#777" stroke-width="1"/></svg>
<div class="t" style="left:508.80px;top:602.53px;font-size:14.73px;color:#2d3e84;">Today (1)</div>
<div class="a" style="left:576px;top:610px;width:807px;height:1px;background:#e2e2e2"></div>
<div class="a" style="left:501px;top:625px;width:598px;height:21px;background:#d9d9d9"></div>
<svg class="a" style="left:505px;top:629px;" width="13" height="13" viewBox="0 0 13 13"><rect x="0.5" y="0.5" width="12" height="12" fill="#fff" stroke="#333" stroke-width="1"/><path d="M2.5 6.5 L5.2 9.2 L10.5 3.5" fill="none" stroke="#333" stroke-width="1.2"/></svg>
<svg class="a" style="left:520px;top:628px;" width="16" height="16" viewBox="0 0 16 16"><path d="M1 1 H14 V15 H1 Z" fill="#f9de80"/><path d="M10 2 H15 V15 H10 Z" fill="#f0cc5a"/><path d="M7 1 V15" stroke="#999" stroke-width="2" stroke-dasharray="1.2 1.2"/><rect x="5.8" y="9" width="2.6" height="3.5" fill="#888"/></svg>
<div class="t" style="left:540.40px;top:631.35px;font-size:11.4px;color:#1a1a1a;">wordpress.zip</div>
<div class="t" style="left:794.50px;width:300px;text-align:right;top:632.03px;font-size:10.6px;color:#6d6d6d;">23,799 KB</div>
<div class="t" style="left:1002.00px;top:631.35px;font-size:11.4px;color:#555;">...</div>
<div class="a" style="left:681px;top:337px;width:320px;height:368px;background:#f0f0f0;border:1px solid #3a74b0;box-sizing:border-box;box-shadow:2px 5px 18px rgba(0,0,0,0.2)"></div>
<div class="a" style="left:681px;top:337px;width:320px;height:31px;background:#0078d7"></div>
<div class="t" style="left:690.50px;top:348.31px;font-size:11.8px;color:#fff;">Copy Items</div>
<svg class="a" style="left:979px;top:347px;" width="12" height="12" viewBox="0 0 12 12"><path d="M0.7 0.7 L11.3 11.3 M11.3 0.7 L0.7 11.3" stroke="#fff" stroke-width="1.1"/></svg>
<div class="t" style="left:696.50px;top:381.73px;font-size:10.95px;color:#000;">Select the place where you want to copy these 9 items,</div>
<div class="t" style="left:696.50px;top:394.73px;font-size:10.95px;color:#000;">then click the Copy button.</div>
<div class="a" style="left:697px;top:425px;width:288px;height:196px;background:#fff;border:1px solid #828790;box-sizing:border-box"></div>
<div class="a" style="left:968px;top:426px;width:16px;height:194px;background:#f0f0f0"></div>
<div class="a" style="left:969px;top:540px;width:14px;height:63px;background:#cdcdcd"></div>
<svg class="a" style="left:970px;top:430px;" width="11" height="8" viewBox="0 0 11 8"><path d="M1.5 6 L5.5 2 L9.5 6" fill="none" stroke="#606060" stroke-width="1.4"/></svg>
<svg class="a" style="left:970px;top:607px;" width="11" height="8" viewBox="0 0 11 8"><path d="M1.5 2 L5.5 6 L9.5 2" fill="none" stroke="#606060" stroke-width="1.4"/></svg>
<div class="a" style="left:715px;top:546px;width:87px;height:20px;background:#cce8ff"></div>
<svg class="a" style="left:721px;top:432px;" width="6" height="9" viewBox="0 0 6 9"><path d="M1 0.8 L4.6 4.5 L1 8.2" fill="none" stroke="#8a8a8a" stroke-width="1.1"/></svg>
<svg class="a" style="left:736px;top:427px;" width="16" height="16" viewBox="0 0 16 16"><path d="M2.2 8 H13.8 L14 11.5 H2 Z" fill="#d4d4d4"/><rect x="2" y="8" width="12" height="1.2" fill="#bdbdbd"/><rect x="1.8" y="11.3" width="12.4" height="4" rx="0.6" fill="#2e2e2e"/><rect x="11" y="12.6" width="1.6" height="1.2" fill="#d8f0d0"/></svg>
<div class="t" style="left:757.50px;top:431.37px;font-size:10.9px;color:#000;">Data 1 (E:)</div>
<svg class="a" style="left:721px;top:452px;" width="6" height="9" viewBox="0 0 6 9"><path d="M1 0.8 L4.6 4.5 L1 8.2" fill="none" stroke="#8a8a8a" stroke-width="1.1"/></svg>
<svg class="a" style="left:736px;top:447px;" width="16" height="16" viewBox="0 0 16 16"><path d="M2.2 8 H13.8 L14 11.5 H2 Z" fill="#d4d4d4"/><rect x="2" y="8" width="12" height="1.2" fill="#bdbdbd"/><rect x="1.8" y="11.3" width="12.4" height="4" rx="0.6" fill="#2e2e2e"/><rect x="11" y="12.6" width="1.6" height="1.2" fill="#d8f0d0"/></svg>
<div class="t" style="left:757.50px;top:451.37px;font-size:10.9px;color:#000;">Data 2 (F:)</div>
<svg class="a" style="left:721px;top:472px;" width="6" height="9" viewBox="0 0 6 9"><path d="M1 0.8 L4.6 4.5 L1 8.2" fill="none" stroke="#8a8a8a" stroke-width="1.1"/></svg>
<svg class="a" style="left:736px;top:467px;" width="16" height="16" viewBox="0 0 16 16"><path d="M2.2 8 H13.8 L14 11.5 H2 Z" fill="#d4d4d4"/><rect x="2" y="8" width="12" height="1.2" fill="#bdbdbd"/><rect x="1.8" y="11.3" width="12.4" height="4" rx="0.6" fill="#2e2e2e"/><rect x="11" y="12.6" width="1.6" height="1.2" fill="#d8f0d0"/></svg>
<div class="t" style="left:757.50px;top:471.37px;font-size:10.9px;color:#000;">myUSB (G:)</div>
<svg class="a" style="left:702px;top:492px;" width="6" height="9" viewBox="0 0 6 9"><path d="M1 0.8 L4.6 4.5 L1 8.2" fill="none" stroke="#8a8a8a" stroke-width="1.1"/></svg>
<svg class="a" style="left:717px;top:488px;" width="17" height="16" viewBox="0 0 17 16"><path d="M0.5 2 H6 L7.5 3.5 H16 V15 H0.5 Z" fill="#f5c443"/><path d="M0.5 5 H16 V15 H0.5 Z" fill="#fbd86a"/><path d="M3 15 V10 L8.5 7 L14 10 V15 H11 V12 H6 V15 Z" fill="#2a7fd0"/></svg>
<div class="t" style="left:738.40px;top:491.37px;font-size:10.9px;color:#000;">Libraries</div>
<svg class="a" style="left:702px;top:512px;" width="6" height="9" viewBox="0 0 6 9"><path d="M1 0.8 L4.6 4.5 L1 8.2" fill="none" stroke="#8a8a8a" stroke-width="1.1"/></svg>
<svg class="a" style="left:717px;top:507px;" width="16" height="16" viewBox="0 0 16 16"><path d="M2.2 8 H13.8 L14 11.5 H2 Z" fill="#d4d4d4"/><rect x="2" y="8" width="12" height="1.2" fill="#bdbdbd"/><rect x="1.8" y="11.3" width="12.4" height="4" rx="0.6" fill="#2e2e2e"/><rect x="11" y="12.6" width="1.6" height="1.2" fill="#d8f0d0"/></svg>
<div class="t" style="left:738.40px;top:511.37px;font-size:10.9px;color:#000;">Data 1 (E:)</div>
<svg class="a" style="left:702px;top:532px;" width="6" height="9" viewBox="0 0 6 9"><path d="M1 0.8 L4.6 4.5 L1 8.2" fill="none" stroke="#8a8a8a" stroke-width="1.1"/></svg>
<svg class="a" style="left:717px;top:527px;" width="16" height="16" viewBox="0 0 16 16"><path d="M2.2 8 H13.8 L14 11.5 H2 Z" fill="#d4d4d4"/><rect x="2" y="8" width="12" height="1.2" fill="#bdbdbd"/><rect x="1.8" y="11.3" width="12.4" height="4" rx="0.6" fill="#2e2e2e"/><rect x="11" y="12.6" width="1.6" height="1.2" fill="#d8f0d0"/></svg>
<div class="t" style="left:738.40px;top:531.37px;font-size:10.9px;color:#000;">Data 2 (F:)</div>
<svg class="a" style="left:717px;top:547px;" width="16" height="16" viewBox="0 0 16 16"><path d="M2.2 8 H13.8 L14 11.5 H2 Z" fill="#d4d4d4"/><rect x="2" y="8" width="12" height="1.2" fill="#bdbdbd"/><rect x="1.8" y="11.3" width="12.4" height="4" rx="0.6" fill="#2e2e2e"/><rect x="11" y="12.6" width="1.6" height="1.2" fill="#d8f0d0"/></svg>
<div class="t" style="left:738.40px;top:551.37px;font-size:10.9px;color:#000;">myUSB (G:)</div>
<svg class="a" style="left:702px;top:572px;" width="6" height="9" viewBox="0 0 6 9"><path d="M1 0.8 L4.6 4.5 L1 8.2" fill="none" stroke="#8a8a8a" stroke-width="1.1"/></svg>
<svg class="a" style="left:717px;top:567px;" width="17" height="17" viewBox="0 0 17 17"><circle cx="11.3" cy="6" r="5.3" fill="#2a7ad0"/><path d="M7 3.5 Q11 6 16 3.8 M7.5 8.5 Q11.5 6.5 16.3 8.2 M11.3 0.8 Q9 6 11.3 11.2" stroke="#8cc8f4" stroke-width="0.8" fill="none"/><rect x="0.5" y="6.5" width="11" height="7.5" fill="#1f6fb8"/><rect x="1.3" y="7.3" width="9.4" height="5.9" fill="#5cb4f0"/><rect x="5" y="14" width="2" height="1.5" fill="#777"/><rect x="2.5" y="15.5" width="7" height="1" fill="#777"/></svg>
<div class="t" style="left:738.40px;top:571.37px;font-size:10.9px;color:#000;">Network</div>
<svg class="a" style="left:702px;top:592px;" width="6" height="9" viewBox="0 0 6 9"><path d="M1 0.8 L4.6 4.5 L1 8.2" fill="none" stroke="#8a8a8a" stroke-width="1.1"/></svg>
<svg class="a" style="left:718px;top:587px;" width="15" height="17" viewBox="0 0 15 17"><path d="M7.5 0.5 C5 0.5 4.3 2.5 4.3 4.5 C4.3 6.5 2 9 1.8 12 C1.7 14 3 15.5 7.5 15.5 C12 15.5 13.3 14 13.2 12 C13 9 10.7 6.5 10.7 4.5 C10.7 2.5 10 0.5 7.5 0.5 Z" fill="#1e1e1e"/><path d="M7.5 6 C6 7.5 4.5 10 4.5 12 C4.5 13.8 6 14.5 7.5 14.5 C9 14.5 10.5 13.8 10.5 12 C10.5 10 9 7.5 7.5 6 Z" fill="#f2f2f2"/><path d="M6.3 4 H8.7 L7.5 5.6 Z" fill="#e8a820"/><path d="M0.5 14.5 C1.5 12.5 3.5 12.5 5 14.3 C4 16.2 1.5 16.3 0.5 14.5 Z" fill="#e8a820"/><path d="M14.5 14.5 C13.5 12.5 11.5 12.5 10 14.3 C11 16.2 13.5 16.3 14.5 14.5 Z" fill="#e8a820"/></svg>
<div class="t" style="left:738.40px;top:591.37px;font-size:10.9px;color:#000;">Linux</div>
<div class="t" style="left:696.80px;top:642.22px;font-size:11.2px;color:#000;">Folder:</div>
<div class="a" style="left:750px;top:634px;width:236px;height:23px;background:#fff;border:1px solid #7a7a7a;box-sizing:border-box"></div>
<div class="t" style="left:755.30px;top:639.91px;font-size:10.5px;color:#000;">myUSB (G:)</div>
<div class="a" style="left:698px;top:671px;width:103px;height:21px;background:#e1e1e1;border:1px solid #adadad;box-sizing:border-box"></div>
<div class="t" style="left:598.30px;width:300px;text-align:center;top:677.91px;font-size:10.5px;color:#000;">Make New Folder</div>
<div class="a" style="left:830px;top:671px;width:73px;height:21px;background:#e1e1e1;border:2px solid #0078d7;box-sizing:border-box"></div>
<div class="t" style="left:715.50px;width:300px;text-align:center;top:677.91px;font-size:10.5px;color:#000;">Copy</div>
<div class="a" style="left:911px;top:671px;width:73px;height:21px;background:#e1e1e1;border:1px solid #adadad;box-sizing:border-box"></div>
<div class="t" style="left:796.00px;width:300px;text-align:center;top:677.91px;font-size:10.5px;color:#000;">Cancel</div>
<svg class="a" style="left:988px;top:692px;" width="10" height="10" viewBox="0 0 10 10"><rect x="7" y="1" width="1.5" height="1.5" fill="#aaa"/><rect x="4" y="4" width="1.5" height="1.5" fill="#aaa"/><rect x="7" y="4" width="1.5" height="1.5" fill="#aaa"/><rect x="1" y="7" width="1.5" height="1.5" fill="#aaa"/><rect x="4" y="7" width="1.5" height="1.5" fill="#aaa"/><rect x="7" y="7" width="1.5" height="1.5" fill="#aaa"/></svg>
<div class="a" style="left:0px;top:1002px;width:1683px;height:40px;background:linear-gradient(90deg,#cfe4ee 0%,#d2e8ee 62%,#d8dcee 74%,#dcd6ec 85%,#ddd6ec 100%)"></div>
<svg class="a" style="left:16px;top:1014px;" width="16" height="16" viewBox="0 0 16 16"><path d="M0 2.2 L6.8 1.2 V7.6 H0 Z M7.6 1.1 L16 0 V7.6 H7.6 Z M0 8.4 H6.8 V14.8 L0 13.8 Z M7.6 8.4 H16 V16 L7.6 14.9 Z" fill="#000"/></svg>
<svg class="a" style="left:66px;top:1013px;" width="18" height="18" viewBox="0 0 18 18"><g transform="translate(9 9)"><rect x="-2" y="-9" width="4" height="5" fill="#3a3a3a" transform="rotate(0)"/><rect x="-2" y="-9" width="4" height="5" fill="#3a3a3a" transform="rotate(45)"/><rect x="-2" y="-9" width="4" height="5" fill="#3a3a3a" transform="rotate(90)"/><rect x="-2" y="-9" width="4" height="5" fill="#3a3a3a" transform="rotate(135)"/><rect x="-2" y="-9" width="4" height="5" fill="#3a3a3a" transform="rotate(180)"/><rect x="-2" y="-9" width="4" height="5" fill="#3a3a3a" transform="rotate(225)"/><rect x="-2" y="-9" width="4" height="5" fill="#3a3a3a" transform="rotate(270)"/><rect x="-2" y="-9" width="4" height="5" fill="#3a3a3a" transform="rotate(315)"/><circle r="6.2" fill="#3a3a3a"/><circle r="3" fill="#d2e6ee"/></g></svg>
<svg class="a" style="left:112px;top:1013px;" width="23" height="17" viewBox="0 0 23 17"><rect x="0.5" y="0.5" width="22" height="16" fill="#5eb4ea" stroke="#2a7fc8"/><rect x="2" y="2" width="19" height="11" fill="#9ad4f8"/><circle cx="6.5" cy="7" r="3.5" fill="#2a6fc0"/><path d="M6.5 7 V3.5 A3.5 3.5 0 0 1 10 7 Z" fill="#f0b020"/><path d="M12 4 H19 M12 7 H19 M12 10 H19" stroke="#fff" stroke-width="1.2"/><rect x="2" y="13.5" width="19" height="2" fill="#3a8ad8"/></svg>
<svg class="a" style="left:161px;top:1010px;" width="24" height="24" viewBox="0 0 24 24"><path d="M7 6 V3.5 A2.5 2.5 0 0 1 9.5 1 H14.5 A2.5 2.5 0 0 1 17 3.5 V6" fill="none" stroke="#3aa0e8" stroke-width="1.8"/><path d="M1 6 H23 V20 A3 3 0 0 1 20 23 H4 A3 3 0 0 1 1 20 Z" fill="#1d4f91"/><rect x="7" y="10" width="4.6" height="4.6" fill="#f25022"/><rect x="12.4" y="10" width="4.6" height="4.6" fill="#7fba00"/><rect x="7" y="15.4" width="4.6" height="4.6" fill="#00a4ef"/><rect x="12.4" y="15.4" width="4.6" height="4.6" fill="#ffb900"/></svg>
<svg class="a" style="left:210px;top:1009px;" width="25" height="25" viewBox="0 0 25 25"><defs><linearGradient id="eg1" x1="0.1" y1="0.2" x2="0.95" y2="0.55"><stop offset="0" stop-color="#1a8fd8"/><stop offset="0.55" stop-color="#22b8c8"/><stop offset="1" stop-color="#5ade5a"/></linearGradient><linearGradient id="eg2" x1="0" y1="0" x2="0.6" y2="1"><stop offset="0" stop-color="#1a78d0"/><stop offset="1" stop-color="#0c4a9c"/></linearGradient></defs><path d="M1 12 C1.5 5 7 0.5 13 0.5 C19.5 0.5 24 5.5 24 11 C24 15 21 17.5 17.5 17.5 C15 17.5 13.2 16.6 12.6 15.4 C15 15 16.5 13.2 16.5 11 C16.5 7.5 13.5 5 10 5 C5.5 5 1.8 8 1 12 Z" fill="url(#eg1)"/><path d="M1 12 C1.8 8 5.5 5 10 5 C7 6.5 5.5 9.5 5.5 12.5 C5.5 17.5 9.5 21 14.5 21 C17 21 19.3 20.3 20.8 19 C18.5 22.3 15 24.5 11.5 24.5 C5.5 24.5 0.8 19 1 12 Z" fill="url(#eg2)"/></svg>
<svg class="a" style="left:259px;top:1013px;" width="24" height="18" viewBox="0 0 24 18"><rect x="0" y="0" width="24" height="18" fill="#3c3c3c"/><rect x="0" y="0" width="24" height="2" fill="#5a5a5a"/><path d="M3.5 6 L7.5 9 L3.5 12" stroke="#d8d8d8" stroke-width="1.4" fill="none"/><rect x="10" y="11.5" width="14" height="6.5" fill="#3ed6f5"/></svg>
<svg class="a" style="left:308px;top:1010px;" width="25" height="24" viewBox="0 0 25 24"><path d="M17.8 0.6 L24 3.4 V20.6 L17.8 23.4 Z" fill="#24a2f2"/><path d="M17.8 0.6 L20.2 1.7 L20.2 6.5 L4.6 17.6 L1 15.4 Z" fill="#0f7fcf"/><path d="M17.8 23.4 L20.2 22.3 L20.2 17.5 L4.6 6.4 L1 8.6 Z" fill="#1a90e0"/><path d="M17.8 6.5 L17.8 17.5 L10.3 12 Z" fill="#d2e6ee"/></svg>
<div class="a" style="left:345px;top:1002px;width:48px;height:40px;background:rgba(255,255,255,0.45)"></div>
<svg class="a" style="left:357px;top:1011px;" width="24" height="21" viewBox="0 0 24 21"><path d="M1 1 H9 L10 3 H1 Z" fill="#e0a020"/><rect x="1" y="3" width="22" height="17" fill="#f9d660"/><path d="M5 20 V13 H19 V20 H15.5 V16 H8.5 V20 Z" fill="#2a7fd0"/></svg>
<svg class="a" style="left:406px;top:1009px;" width="24" height="25" viewBox="0 0 24 25"><defs><linearGradient id="ff1" x1="0.85" y1="0.05" x2="0.25" y2="0.95"><stop offset="0" stop-color="#ffe226"/><stop offset="0.4" stop-color="#ff9a26"/><stop offset="0.75" stop-color="#ff4a3a"/><stop offset="1" stop-color="#e81e6a"/></linearGradient><radialGradient id="ff2" cx="0.55" cy="0.4" r="0.6"><stop offset="0" stop-color="#9a60f8"/><stop offset="1" stop-color="#5a2ad0"/></radialGradient></defs><path d="M12 24 C5.5 24 1 19 1 13.2 C1 10 2.3 7.5 4 5.8 C4 8 5 9.5 6 10 C6.5 7 9 4.5 12.5 4 C11 3 11.5 1 13 0.5 C14 3 17 3.5 19.5 6 C22 8.5 23 11 23 13.5 C23 19.5 18.5 24 12 24 Z" fill="url(#ff1)"/><circle cx="12.3" cy="13.2" r="5.2" fill="url(#ff2)"/><path d="M6.5 11 C7.5 8.5 10 7.5 12.5 8 C10 8.8 8.8 10.5 9.2 12.5 Z" fill="#ff8a30"/></svg>
<svg class="a" style="left:454px;top:1009px;" width="24" height="24" viewBox="0 0 24 24"><defs><linearGradient id="np1" x1="0" y1="0" x2="1" y2="1"><stop offset="0" stop-color="#b8e6f4"/><stop offset="0.5" stop-color="#5ab4d4"/><stop offset="1" stop-color="#3a94b8"/></linearGradient></defs><path d="M14 1.5 L21 2 L23 19 L16 22.5 Z" fill="#f4f4f4" stroke="#a8a8a8" stroke-width="0.8"/><path d="M6 2.5 L18 1.5 L19.5 19 L1.5 19.5 Z" fill="url(#np1)"/><path d="M6 2.5 L18 1.5 L18.2 3 L6 4 Z" fill="#7a8a90"/></svg>
<svg class="a" style="left:504px;top:1014px;" width="23" height="19" viewBox="0 0 23 19"><path d="M1 6 L10 3 L22 6 L22 10 L12 12 L1 10 Z" fill="#e8e8e8" stroke="#aaa" stroke-width="0.6"/><path d="M1 6 L8 3 L10 7 L3 9 Z" fill="#333"/><rect x="2" y="10" width="12" height="8" fill="#d8d8d8" stroke="#999" stroke-width="0.6"/><rect x="4" y="12" width="3" height="3" fill="#333"/><rect x="9" y="12" width="3" height="3" fill="#333"/></svg>
<svg class="a" style="left:553px;top:1011px;" width="22" height="22" viewBox="0 0 22 22"><rect x="0" y="0" width="22" height="22" fill="#2090e8"/><circle cx="15.5" cy="5" r="2" fill="#d8f0ff"/><path d="M0 22 V13 L8 8 L22 20 V22 Z" fill="#1a3f8a"/><path d="M10 22 L16 14 L22 18 V22 Z" fill="#3a6ad8"/></svg>
<svg class="a" style="left:601px;top:1011px;" width="24" height="24" viewBox="0 0 24 24"><rect x="6.5" y="1.5" width="14" height="12" fill="none" stroke="#222" stroke-width="1" stroke-dasharray="1.5 1.5"/><rect x="0.5" y="12.5" width="13" height="9" rx="1" fill="#9a9a9a" stroke="#555"/><rect x="4" y="11" width="5" height="2" fill="#555"/><circle cx="7" cy="17" r="2.8" fill="#fff"/><path d="M18 15 V22 M14.5 18.5 H21.5" stroke="#2da84a" stroke-width="1.8"/></svg>
<div class="a" style="left:55px;top:1040px;width:40px;height:2px;background:#0a64c0"></div>
<div class="a" style="left:104px;top:1040px;width:32px;height:2px;background:#0a64c0"></div>
<div class="a" style="left:345px;top:1040px;width:48px;height:2px;background:#0a64c0"></div>
<div class="a" style="left:447px;top:1040px;width:32px;height:2px;background:#0a64c0"></div>
<div class="a" style="left:496px;top:1040px;width:40px;height:2px;background:#0a64c0"></div>
<div class="a" style="left:545px;top:1040px;width:39px;height:2px;background:#0a64c0"></div>
<div class="a" style="left:594px;top:1040px;width:39px;height:2px;background:#0a64c0"></div>
<div class="a" style="left:136px;top:1040px;width:8px;height:2px;background:#6aa0d8"></div>
<div class="a" style="left:479px;top:1040px;width:8px;height:2px;background:#6aa0d8"></div>
<svg class="a" style="left:1371px;top:1017px;" width="14" height="9" viewBox="0 0 14 9"><path d="M1 8 L7 1.8 L13 8" fill="none" stroke="#111" stroke-width="1.2"/></svg>
<svg class="a" style="left:1401px;top:1016px;" width="18" height="13" viewBox="0 0 18 13"><path d="M3.5 12 A3.2 3.2 0 0 1 3.2 5.7 A5 5 0 0 1 12.5 4.3 A3.9 3.9 0 0 1 14 12 Z" fill="#a8a8a8" stroke="#555" stroke-width="1"/></svg>
<svg class="a" style="left:1433px;top:1015px;" width="18" height="16" viewBox="0 0 18 16"><rect x="0.5" y="0.5" width="4" height="4" fill="none" stroke="#111"/><path d="M2.5 4.5 V9.5 H4" stroke="#111" fill="none"/><rect x="4.5" y="2.5" width="13" height="9" fill="none" stroke="#111"/><path d="M11 11.5 V14.5 M7 14.5 H15" stroke="#111"/></svg>
<svg class="a" style="left:1465px;top:1014px;" width="18" height="17" viewBox="0 0 18 17"><path d="M1.5 5.5 H4.5 L8.5 1.5 V15.5 L4.5 11.5 H1.5 Z" fill="none" stroke="#111" stroke-width="1"/><path d="M11 5.5 A3.5 3.5 0 0 1 11 11.5 M13 3.5 A6 6 0 0 1 13 13.5 M15 1.5 A8.5 8.5 0 0 1 15 15.5" fill="none" stroke="#111" stroke-width="1"/></svg>
<svg class="a" style="left:1497px;top:1015px;" width="25" height="13" viewBox="0 0 25 13"><rect x="0.5" y="0.5" width="24" height="12" rx="1" fill="none" stroke="#111"/><path d="M3 3.5 H22 M3 6 H22 M6 9 H19" stroke="#111" stroke-width="1" stroke-dasharray="1.2 1"/></svg>
<div class="t" style="left:1397.50px;width:300px;text-align:center;top:1009.38px;font-size:11.6px;color:#111;letter-spacing:-0.3px">ENG</div>
<div class="t" style="left:1397.50px;width:300px;text-align:center;top:1025.68px;font-size:11.6px;color:#111;">US</div>
<div class="t" style="left:1448.00px;width:300px;text-align:center;top:1009.21px;font-size:11.8px;color:#111;letter-spacing:-0.2px">2:20 PM</div>
<div class="t" style="left:1448.30px;width:300px;text-align:center;top:1025.51px;font-size:11.8px;color:#111;letter-spacing:-0.2px">1/9/2023</div>
<svg class="a" style="left:1641px;top:1013px;" width="26" height="25" viewBox="0 0 26 25"><path d="M1 1.5 H17.5 V13 H7 L4 16 V13 H1 Z" fill="#111"/><path d="M4 5 H14.5 M4 8 H14.5" stroke="#ddd6ec" stroke-width="1"/><circle cx="16.5" cy="15.8" r="7.3" fill="#ddd6ec" stroke="#8a8a8a" stroke-width="1"/><text x="16.5" y="19.6" font-family="Liberation Sans" font-size="10.5" fill="#111" text-anchor="middle">3</text></svg>
<div class="a" style="left:1678px;top:1005px;width:1px;height:37px;background:#a8a0b8"></div>

</body></html>
